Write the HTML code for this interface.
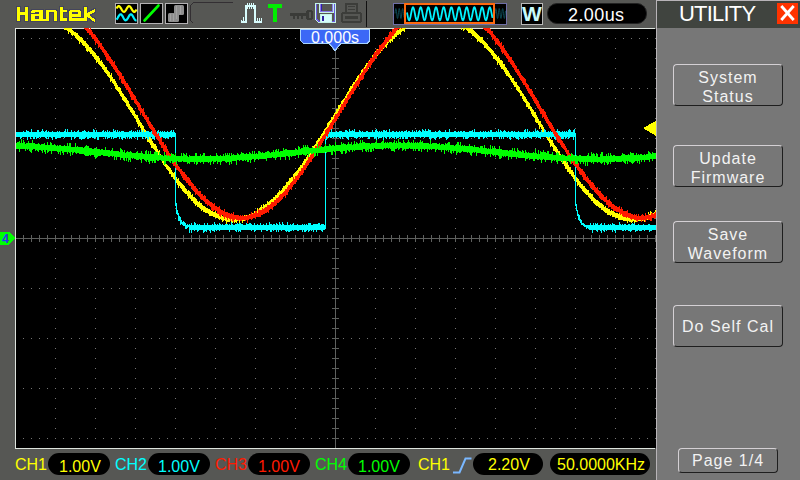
<!DOCTYPE html>
<html><head><meta charset="utf-8">
<style>
*{margin:0;padding:0;box-sizing:border-box}
html,body{width:800px;height:480px;overflow:hidden;background:#565754}
body{position:relative;font-family:"Liberation Sans",sans-serif}
.abs{position:absolute}
.t{position:absolute;font-size:16px;line-height:16px;top:457px;white-space:nowrap;transform-origin:0 0}
.pill{position:absolute;background:#000;border-radius:11px;height:22px;top:453px}

.btn{position:absolute;left:673px;width:110px;border-top:1px solid #d4d0d4;border-left:1px solid #d4d0d4;border-right:1px solid #1e1e1e;border-bottom:1px solid #1e1e1e;border-radius:4px;color:#f2f2f2;font-size:16px;text-align:center;letter-spacing:1px}
</style></head><body>
<svg class="abs" style="left:0;top:0" width="800" height="480" viewBox="0 0 800 480" shape-rendering="crispEdges">

<!-- header icons -->
<rect x="115" y="3" width="23" height="21" fill="#b4b2b4"/>
<rect x="116" y="4" width="21" height="19" fill="#000"/>
<path d="M116.5 8.47 L117.0 7.64 L117.5 6.93 L118.0 6.42 L118.5 6.14 L119.0 6.13 L119.5 6.38 L120.0 6.87 L120.5 7.56 L121.0 8.39 L121.5 9.26 L122.0 10.12 L122.5 10.87 L123.0 11.45 L123.5 11.80 L124.0 11.90 L124.5 11.72 L125.0 11.30 L125.5 10.66 L126.0 9.87 L126.5 9.00 L127.0 8.13 L127.5 7.34 L128.0 6.70 L128.5 6.28 L129.0 6.10 L129.5 6.20 L130.0 6.55 L130.5 7.13 L131.0 7.88 L131.5 8.74 L132.0 9.61 L132.5 10.44 L133.0 11.13 L133.5 11.62 L134.0 11.87 L134.5 11.86 L135.0 11.58 L135.5 11.07 L136.0 10.36 L136.5 9.53" stroke="#ffff00" stroke-width="2.2" fill="none" shape-rendering="auto"/>
<path d="M116.5 19.68 L117.0 19.02 L117.5 18.20 L118.0 17.30 L118.5 16.40 L119.0 15.58 L119.5 14.92 L120.0 14.48 L120.5 14.30 L121.0 14.40 L121.5 14.77 L122.0 15.36 L122.5 16.14 L123.0 17.03 L123.5 17.94 L124.0 18.79 L124.5 19.50 L125.0 20.01 L125.5 20.27 L126.0 20.26 L126.5 19.97 L127.0 19.44 L127.5 18.71 L128.0 17.85 L128.5 16.93 L129.0 16.06 L129.5 15.29 L130.0 14.72 L130.5 14.38 L131.0 14.31 L131.5 14.52 L132.0 14.98 L132.5 15.66 L133.0 16.49 L133.5 17.39 L134.0 18.29 L134.5 19.09 L135.0 19.73 L135.5 20.15 L136.0 20.30 L136.5 20.17" stroke="#00f0ff" stroke-width="2.2" fill="none" shape-rendering="auto"/>
<rect x="140" y="3" width="23" height="21" fill="#b4b2b4"/>
<rect x="141" y="4" width="21" height="19" fill="#000"/>
<line x1="144.5" y1="20.5" x2="158.5" y2="5.5" stroke="#00ff00" stroke-width="2.6" stroke-linecap="round" shape-rendering="auto"/>
<rect x="165" y="3" width="23" height="21" fill="#b4b2b4"/>
<rect x="166" y="4" width="21" height="19" fill="#000"/>
<defs><filter id="bl" x="-20%" y="-20%" width="140%" height="140%"><feGaussianBlur stdDeviation="0.7"/></filter></defs>
<g shape-rendering="auto" fill="#8e8e8e" filter="url(#bl)">
<rect x="168" y="13" width="11" height="9" rx="1.5"/>
<rect x="174" y="5" width="10" height="10" rx="1.5"/>
</g>
<g fill="#b0b0b0" opacity="0.6"><rect x="170" y="14" width="1" height="7"/><rect x="173" y="14" width="1" height="7"/><rect x="176" y="6" width="1" height="13"/><rect x="180" y="6" width="1" height="8"/></g>
<path d="M193 2h40v1h-40zM190 5h1v16h-1zM191 4h1v1h-1zM192 3h1v1h-1zM191 21h1v1h-1zM192 22h1v1h-1z" fill="#332f33"/>
<!-- pulse icon -->
<path d="M241 21.8H246V6.2H255V21.8H262" fill="none" stroke="#d8fcfc" stroke-width="2" shape-rendering="crispEdges"/>
<path d="M247 3h1v6h-1zM249 3h1v6h-1zM251 3h1v6h-1zM253 3h1v6h-1zM257 18h1v5h-1zM259 18h1v5h-1zM261 18h1v5h-1zM243 17h1v6h-1zM241 20h1v3h-1z" fill="#d8fcfc"/>
<!-- T -->
<rect x="268" y="4" width="14" height="4" fill="#00ee00"/>
<rect x="273" y="8" width="4" height="14" fill="#00ee00"/>
<!-- key -->
<g fill="#3a3b38">
<rect x="290" y="13" width="17" height="3"/>
<rect x="293" y="16" width="2" height="3"/><rect x="297" y="16" width="2" height="3"/><rect x="301" y="16" width="2" height="3"/>
<rect x="306" y="10" width="7" height="10" rx="3"/>
</g>
<rect x="309" y="12" width="2" height="6" fill="#565754"/>
<!-- floppy -->
<path d="M315 3h21v20h-18l-3-3z" fill="#c4f2e6"/>
<path d="M316 4h19v18h-16.5l-2.5-2.5z" fill="#6a58e0"/>
<path d="M317 4h17v17h-15l-2-2z" fill="#565754"/>
<path d="M319 3h15v10h-15z" fill="#c4f2e6"/>
<path d="M320 4h13v8h-13z" fill="#8a78e8"/>
<path d="M321 4h11v7h-11z" fill="#565754"/>
<rect x="321" y="4" width="1" height="7" fill="#3020b0"/>
<path d="M320 14h12v8h-12z" fill="#c4f2e6"/>
<rect x="321" y="15" width="10" height="7" fill="#d4fcfc"/>
<rect x="322" y="16" width="2" height="5" fill="#3020a0"/>
<!-- printer -->
<g fill="none" stroke="#3c3d3a" stroke-width="2">
<rect x="346" y="4" width="11" height="9"/>
<rect x="342" y="13" width="19" height="9" rx="2"/>
</g>
<rect x="348" y="6" width="7" height="1" fill="#3c3d3a"/><rect x="348" y="9" width="7" height="1" fill="#3c3d3a"/>
<rect x="345" y="16" width="13" height="3" fill="#3c3d3a"/>
<rect x="366" y="1" width="1" height="26" fill="#111"/>
<!-- overview -->
<rect x="393" y="3" width="114" height="22" fill="#6e6ea6"/>
<rect x="394" y="4" width="112" height="20" fill="#000"/>
<path d="M395.0 13.50 L395.2 11.27 L395.5 9.51 L395.8 8.59 L396.0 8.69 L396.2 9.80 L396.5 11.69 L396.8 13.96 L397.0 16.13 L397.2 17.75 L397.5 18.48 L397.8 18.16 L398.0 16.87 L398.2 14.87 L398.5 12.58 L398.8 10.49 L399.0 9.02 L399.2 8.50 L399.5 9.02 L399.8 10.49 L400.0 12.58 L400.2 14.87 L400.5 16.87 L400.8 18.16 L401.0 18.48 L401.2 17.75 L401.5 16.13 L401.8 13.96 L402.0 11.69 L402.2 9.80 L402.5 8.69 L402.8 8.59 L403.0 9.51 L403.2 11.27 L403.5 13.50 L403.8 15.73 L404.0 17.49M495.0 13.50 L495.2 11.27 L495.5 9.51 L495.8 8.59 L496.0 8.69 L496.2 9.80 L496.5 11.69 L496.8 13.96 L497.0 16.13 L497.2 17.75 L497.5 18.48 L497.8 18.16 L498.0 16.87 L498.2 14.87 L498.5 12.58 L498.8 10.49 L499.0 9.02 L499.2 8.50 L499.5 9.02 L499.8 10.49 L500.0 12.58 L500.2 14.87 L500.5 16.87 L500.8 18.16 L501.0 18.48 L501.2 17.75 L501.5 16.13 L501.8 13.96 L502.0 11.69 L502.2 9.80 L502.5 8.69 L502.8 8.59 L503.0 9.51 L503.2 11.27 L503.5 13.50 L503.8 15.73 L504.0 17.49 L504.2 18.41 L504.5 18.31 L504.8 17.20 L505.0 15.31 L505.2 13.04 L505.5 10.87" stroke="#0c4a55" stroke-width="1" fill="none" shape-rendering="auto"/>
<rect x="404" y="3" width="91" height="21" fill="#ff6a10"/>
<rect x="406" y="5" width="87" height="17" fill="#000"/>
<path d="M407.00 12.46 L407.25 13.78 L407.50 15.10 L407.75 16.37 L408.00 17.52 L408.25 18.52 L408.50 19.32 L408.75 19.88 L409.00 20.19 L409.25 20.23 L409.50 20.00 L409.75 19.51 L410.00 18.78 L410.25 17.84 L410.50 16.73 L410.75 15.49 L411.00 14.18 L411.25 12.85 L411.50 11.57 L411.75 10.37 L412.00 9.31 L412.25 8.44 L412.50 7.79 L412.75 7.39 L413.00 7.25 L413.25 7.39 L413.50 7.79 L413.75 8.44 L414.00 9.31 L414.25 10.37 L414.50 11.57 L414.75 12.85 L415.00 14.18 L415.25 15.49 L415.50 16.73 L415.75 17.84 L416.00 18.78 L416.25 19.51 L416.50 20.00 L416.75 20.23 L417.00 20.19 L417.25 19.88 L417.50 19.32 L417.75 18.52 L418.00 17.52 L418.25 16.37 L418.50 15.10 L418.75 13.78 L419.00 12.46 L419.25 11.19 L419.50 10.03 L419.75 9.03 L420.00 8.22 L420.25 7.64 L420.50 7.32 L420.75 7.26 L421.00 7.48 L421.25 7.96 L421.50 8.68 L421.75 9.61 L422.00 10.71 L422.25 11.94 L422.50 13.25 L422.75 14.58 L423.00 15.87 L423.25 17.08 L423.50 18.14 L423.75 19.02 L424.00 19.69 L424.25 20.10 L424.50 20.25 L424.75 20.13 L425.00 19.74 L425.25 19.10 L425.50 18.24 L425.75 17.19 L426.00 16.00 L426.25 14.71 L426.50 13.38 L426.75 12.07 L427.00 10.83 L427.25 9.71 L427.50 8.76 L427.75 8.02 L428.00 7.52 L428.25 7.27 L428.50 7.30 L428.75 7.60 L429.00 8.15 L429.25 8.94 L429.50 9.92 L429.75 11.07 L430.00 12.33 L430.25 13.65 L430.50 14.97 L430.75 16.25 L431.00 17.41 L431.25 18.43 L431.50 19.25 L431.75 19.84 L432.00 20.17 L432.25 20.24 L432.50 20.04 L432.75 19.57 L433.00 18.86 L433.25 17.94 L433.50 16.85 L433.75 15.62 L434.00 14.31 L434.25 12.99 L434.50 11.69 L434.75 10.48 L435.00 9.41 L435.25 8.51 L435.50 7.84 L435.75 7.41 L436.00 7.25 L436.25 7.36 L436.50 7.74 L436.75 8.36 L437.00 9.21 L437.25 10.25 L437.50 11.44 L437.75 12.72 L438.00 14.05 L438.25 15.36 L438.50 16.61 L438.75 17.74 L439.00 18.70 L439.25 19.45 L439.50 19.97 L439.75 20.22 L440.00 20.21 L440.25 19.93 L440.50 19.38 L440.75 18.61 L441.00 17.63 L441.25 16.49 L441.50 15.23 L441.75 13.92 L442.00 12.59 L442.25 11.32 L442.50 10.14 L442.75 9.12 L443.00 8.29 L443.25 7.69 L443.50 7.34 L443.75 7.26 L444.00 7.45 L444.25 7.90 L444.50 8.59 L444.75 9.51 L445.00 10.60 L445.25 11.82 L445.50 13.12 L445.75 14.45 L446.00 15.75 L446.25 16.96 L446.50 18.04 L446.75 18.95 L447.00 19.63 L447.25 20.07 L447.50 20.25 L447.75 20.15 L448.00 19.79 L448.25 19.18 L448.50 18.33 L448.75 17.30 L449.00 16.12 L449.25 14.84 L449.50 13.52 L449.75 12.20 L450.00 10.95 L450.25 9.82 L450.50 8.85 L450.75 8.08 L451.00 7.55 L451.25 7.28 L451.50 7.28 L451.75 7.55 L452.00 8.08 L452.25 8.85 L452.50 9.82 L452.75 10.95 L453.00 12.20 L453.25 13.52 L453.50 14.84 L453.75 16.12 L454.00 17.30 L454.25 18.33 L454.50 19.18 L454.75 19.79 L455.00 20.15 L455.25 20.25 L455.50 20.07 L455.75 19.63 L456.00 18.95 L456.25 18.04 L456.50 16.96 L456.75 15.75 L457.00 14.45 L457.25 13.12 L457.50 11.82 L457.75 10.60 L458.00 9.51 L458.25 8.59 L458.50 7.90 L458.75 7.45 L459.00 7.26 L459.25 7.34 L459.50 7.69 L459.75 8.29 L460.00 9.12 L460.25 10.14 L460.50 11.32 L460.75 12.59 L461.00 13.92 L461.25 15.23 L461.50 16.49 L461.75 17.63 L462.00 18.61 L462.25 19.38 L462.50 19.93 L462.75 20.21 L463.00 20.22 L463.25 19.97 L463.50 19.45 L463.75 18.70 L464.00 17.74 L464.25 16.61 L464.50 15.36 L464.75 14.05 L465.00 12.72 L465.25 11.44 L465.50 10.25 L465.75 9.21 L466.00 8.36 L466.25 7.74 L466.50 7.36 L466.75 7.25 L467.00 7.41 L467.25 7.84 L467.50 8.51 L467.75 9.41 L468.00 10.48 L468.25 11.69 L468.50 12.99 L468.75 14.31 L469.00 15.62 L469.25 16.85 L469.50 17.94 L469.75 18.86 L470.00 19.57 L470.25 20.04 L470.50 20.24 L470.75 20.17 L471.00 19.84 L471.25 19.25 L471.50 18.43 L471.75 17.41 L472.00 16.25 L472.25 14.97 L472.50 13.65 L472.75 12.33 L473.00 11.07 L473.25 9.92 L473.50 8.94 L473.75 8.15 L474.00 7.60 L474.25 7.30 L474.50 7.27 L474.75 7.52 L475.00 8.02 L475.25 8.76 L475.50 9.71 L475.75 10.83 L476.00 12.07 L476.25 13.38 L476.50 14.71 L476.75 16.00 L477.00 17.19 L477.25 18.24 L477.50 19.10 L477.75 19.74 L478.00 20.13 L478.25 20.25 L478.50 20.10 L478.75 19.69 L479.00 19.02 L479.25 18.14 L479.50 17.08 L479.75 15.87 L480.00 14.58 L480.25 13.25 L480.50 11.94 L480.75 10.71 L481.00 9.61 L481.25 8.68 L481.50 7.96 L481.75 7.48 L482.00 7.26 L482.25 7.32 L482.50 7.64 L482.75 8.22 L483.00 9.03 L483.25 10.03 L483.50 11.19 L483.75 12.46 L484.00 13.78 L484.25 15.10 L484.50 16.37 L484.75 17.52 L485.00 18.52 L485.25 19.32 L485.50 19.88 L485.75 20.19 L486.00 20.23 L486.25 20.00 L486.50 19.51 L486.75 18.78 L487.00 17.84 L487.25 16.73 L487.50 15.49 L487.75 14.18 L488.00 12.85 L488.25 11.57 L488.50 10.37 L488.75 9.31 L489.00 8.44 L489.25 7.79 L489.50 7.39 L489.75 7.25 L490.00 7.39 L490.25 7.79 L490.50 8.44 L490.75 9.31 L491.00 10.37 L491.25 11.57 L491.50 12.85 L491.75 14.18 L492.00 15.49 L492.25 16.73 L492.50 17.84" stroke="#00f4ff" stroke-width="1.8" fill="none" shape-rendering="auto"/>
<!-- W box -->
<rect x="521" y="3" width="22" height="22" fill="#b8b8b8"/>
<rect x="522" y="4" width="20" height="20" fill="#000"/>

<!-- logo -->
<path d="M16 21h5v1h-5zM24 21h5v1h-5zM30 21h20v1h-20zM53 21h5v1h-5zM59 21h29v1h-29zM91 21h3v1h-3zM95 21h1v1h-1zM16 6h5v1h-5zM24 6h5v1h-5zM59 6h5v1h-5zM83 6h5v1h-5zM16 16h1v1h-1zM20 16h1v1h-1zM24 16h1v1h-1zM28 16h1v1h-1zM30 16h1v1h-1zM35 16h4v1h-4zM43 16h1v1h-1zM45 16h1v1h-1zM49 16h1v1h-1zM53 16h1v1h-1zM57 16h1v1h-1zM59 16h1v1h-1zM63 16h1v1h-1zM68 16h1v1h-1zM81 16h1v1h-1zM83 16h1v1h-1zM91 16h2v1h-2zM16 12h1v1h-1zM28 12h1v1h-1zM30 12h1v1h-1zM35 12h4v1h-4zM43 12h1v1h-1zM45 12h1v1h-1zM49 12h5v1h-5zM57 12h1v1h-1zM59 12h1v1h-1zM63 12h6v1h-6zM72 12h6v1h-6zM81 12h1v1h-1zM83 12h1v1h-1zM87 12h1v1h-1zM94 12h2v1h-2zM16 18h1v1h-1zM20 18h1v1h-1zM24 18h1v1h-1zM28 18h1v1h-1zM30 18h1v1h-1zM35 18h4v1h-4zM43 18h3v1h-3zM49 18h1v1h-1zM53 18h1v1h-1zM57 18h1v1h-1zM59 18h1v1h-1zM67 18h2v1h-2zM87 18h3v1h-3zM94 18h2v1h-2zM16 17h1v1h-1zM20 17h1v1h-1zM24 17h1v1h-1zM28 17h1v1h-1zM30 17h1v1h-1zM35 17h1v1h-1zM38 17h1v1h-1zM43 17h1v1h-1zM45 17h1v1h-1zM49 17h1v1h-1zM53 17h1v1h-1zM57 17h1v1h-1zM59 17h1v1h-1zM63 17h6v1h-6zM72 17h12v1h-12zM87 17h1v1h-1zM92 17h3v1h-3zM16 9h1v1h-1zM20 9h1v1h-1zM24 9h1v1h-1zM28 9h1v1h-1zM31 9h13v1h-13zM45 9h12v1h-12zM59 9h1v1h-1zM63 9h5v1h-5zM69 9h12v1h-12zM83 9h1v1h-1zM87 9h1v1h-1zM91 9h3v1h-3zM95 9h1v1h-1zM93 22h3v1h-3zM16 13h1v1h-1zM28 13h1v1h-1zM30 13h9v1h-9zM43 13h1v1h-1zM45 13h1v1h-1zM49 13h1v1h-1zM53 13h1v1h-1zM57 13h1v1h-1zM59 13h1v1h-1zM63 13h1v1h-1zM68 13h1v1h-1zM72 13h6v1h-6zM81 13h1v1h-1zM83 13h1v1h-1zM92 13h3v1h-3zM16 10h1v1h-1zM20 10h1v1h-1zM24 10h1v1h-1zM28 10h1v1h-1zM30 10h2v1h-2zM43 10h1v1h-1zM45 10h1v1h-1zM56 10h2v1h-2zM59 10h1v1h-1zM67 10h3v1h-3zM80 10h2v1h-2zM83 10h1v1h-1zM87 10h1v1h-1zM89 10h3v1h-3zM95 10h1v1h-1zM16 19h1v1h-1zM20 19h1v1h-1zM24 19h1v1h-1zM28 19h1v1h-1zM30 19h1v1h-1zM49 19h1v1h-1zM53 19h1v1h-1zM57 19h1v1h-1zM59 19h1v1h-1zM67 19h2v1h-2zM87 19h1v1h-1zM89 19h2v1h-2zM95 19h1v1h-1zM16 7h1v1h-1zM20 7h1v1h-1zM24 7h1v1h-1zM28 7h1v1h-1zM59 7h1v1h-1zM63 7h1v1h-1zM83 7h1v1h-1zM87 7h1v1h-1zM16 20h1v1h-1zM20 20h1v1h-1zM24 20h1v1h-1zM28 20h1v1h-1zM30 20h1v1h-1zM49 20h1v1h-1zM53 20h1v1h-1zM57 20h1v1h-1zM59 20h1v1h-1zM67 20h2v1h-2zM87 20h1v1h-1zM90 20h2v1h-2zM95 20h1v1h-1zM16 8h1v1h-1zM20 8h1v1h-1zM24 8h1v1h-1zM28 8h1v1h-1zM59 8h1v1h-1zM63 8h1v1h-1zM83 8h1v1h-1zM87 8h1v1h-1zM93 8h3v1h-3zM16 14h1v1h-1zM28 14h1v1h-1zM30 14h1v1h-1zM43 14h1v1h-1zM45 14h1v1h-1zM49 14h1v1h-1zM53 14h1v1h-1zM57 14h1v1h-1zM59 14h1v1h-1zM63 14h1v1h-1zM68 14h1v1h-1zM81 14h1v1h-1zM83 14h1v1h-1zM90 14h3v1h-3zM16 15h1v1h-1zM20 15h5v1h-5zM28 15h1v1h-1zM30 15h1v1h-1zM43 15h1v1h-1zM45 15h1v1h-1zM49 15h1v1h-1zM53 15h1v1h-1zM57 15h1v1h-1zM59 15h1v1h-1zM63 15h1v1h-1zM68 15h1v1h-1zM81 15h1v1h-1zM83 15h1v1h-1zM90 15h2v1h-2zM16 11h1v1h-1zM20 11h5v1h-5zM28 11h1v1h-1zM30 11h1v1h-1zM43 11h1v1h-1zM45 11h1v1h-1zM57 11h1v1h-1zM59 11h1v1h-1zM67 11h2v1h-2zM81 11h1v1h-1zM83 11h1v1h-1zM87 11h3v1h-3zM95 11h1v1h-1z" fill="#44455c"/>
<path d="M17 17h3v1h-3zM25 17h3v1h-3zM31 17h4v1h-4zM39 17h4v1h-4zM46 17h3v1h-3zM54 17h3v1h-3zM60 17h3v1h-3zM69 17h3v1h-3zM84 17h3v1h-3zM88 17h4v1h-4zM17 20h3v1h-3zM25 20h3v1h-3zM31 20h18v1h-18zM54 20h3v1h-3zM60 20h7v1h-7zM69 20h18v1h-18zM92 20h3v1h-3zM17 13h11v1h-11zM39 13h4v1h-4zM46 13h3v1h-3zM54 13h3v1h-3zM60 13h3v1h-3zM69 13h3v1h-3zM78 13h3v1h-3zM84 13h8v1h-8zM17 9h3v1h-3zM25 9h3v1h-3zM60 9h3v1h-3zM84 9h3v1h-3zM94 9h1v1h-1zM17 11h3v1h-3zM25 11h3v1h-3zM31 11h12v1h-12zM46 11h11v1h-11zM60 11h7v1h-7zM69 11h12v1h-12zM84 11h3v1h-3zM90 11h5v1h-5zM17 10h3v1h-3zM25 10h3v1h-3zM32 10h11v1h-11zM46 10h10v1h-10zM60 10h7v1h-7zM70 10h10v1h-10zM84 10h3v1h-3zM92 10h3v1h-3zM17 18h3v1h-3zM25 18h3v1h-3zM31 18h4v1h-4zM39 18h4v1h-4zM46 18h3v1h-3zM54 18h3v1h-3zM60 18h7v1h-7zM69 18h18v1h-18zM90 18h4v1h-4zM17 19h3v1h-3zM25 19h3v1h-3zM31 19h18v1h-18zM54 19h3v1h-3zM60 19h7v1h-7zM69 19h18v1h-18zM91 19h4v1h-4zM94 21h1v1h-1zM17 15h3v1h-3zM25 15h3v1h-3zM31 15h12v1h-12zM46 15h3v1h-3zM54 15h3v1h-3zM60 15h3v1h-3zM69 15h12v1h-12zM84 15h6v1h-6zM17 12h11v1h-11zM31 12h4v1h-4zM39 12h4v1h-4zM46 12h3v1h-3zM54 12h3v1h-3zM60 12h3v1h-3zM69 12h3v1h-3zM78 12h3v1h-3zM84 12h3v1h-3zM88 12h6v1h-6zM17 7h3v1h-3zM25 7h3v1h-3zM60 7h3v1h-3zM84 7h3v1h-3zM17 16h3v1h-3zM25 16h3v1h-3zM31 16h4v1h-4zM39 16h4v1h-4zM46 16h3v1h-3zM54 16h3v1h-3zM60 16h3v1h-3zM69 16h12v1h-12zM84 16h7v1h-7zM17 8h3v1h-3zM25 8h3v1h-3zM60 8h3v1h-3zM84 8h3v1h-3zM17 14h11v1h-11zM31 14h12v1h-12zM46 14h3v1h-3zM54 14h3v1h-3zM60 14h3v1h-3zM69 14h12v1h-12zM84 14h6v1h-6z" fill="#ffff00"/>
<!-- screen -->
<rect x="15" y="28" width="640" height="421" fill="#dde3dd"/>
<rect x="16" y="29" width="640" height="419" fill="#000"/>
<path d="M23 38h1v1h-1zM31 38h1v1h-1zM39 38h1v1h-1zM47 38h1v1h-1zM55 38h1v1h-1zM63 38h1v1h-1zM71 38h1v1h-1zM79 38h1v1h-1zM87 38h1v1h-1zM95 38h1v1h-1zM103 38h1v1h-1zM111 38h1v1h-1zM119 38h1v1h-1zM127 38h1v1h-1zM135 38h1v1h-1zM143 38h1v1h-1zM151 38h1v1h-1zM159 38h1v1h-1zM167 38h1v1h-1zM175 38h1v1h-1zM183 38h1v1h-1zM191 38h1v1h-1zM199 38h1v1h-1zM207 38h1v1h-1zM215 38h1v1h-1zM223 38h1v1h-1zM231 38h1v1h-1zM239 38h1v1h-1zM247 38h1v1h-1zM255 38h1v1h-1zM263 38h1v1h-1zM271 38h1v1h-1zM279 38h1v1h-1zM287 38h1v1h-1zM295 38h1v1h-1zM303 38h1v1h-1zM311 38h1v1h-1zM319 38h1v1h-1zM327 38h1v1h-1zM335 38h1v1h-1zM343 38h1v1h-1zM351 38h1v1h-1zM359 38h1v1h-1zM367 38h1v1h-1zM375 38h1v1h-1zM383 38h1v1h-1zM391 38h1v1h-1zM399 38h1v1h-1zM407 38h1v1h-1zM415 38h1v1h-1zM423 38h1v1h-1zM431 38h1v1h-1zM439 38h1v1h-1zM447 38h1v1h-1zM455 38h1v1h-1zM463 38h1v1h-1zM471 38h1v1h-1zM479 38h1v1h-1zM487 38h1v1h-1zM495 38h1v1h-1zM503 38h1v1h-1zM511 38h1v1h-1zM519 38h1v1h-1zM527 38h1v1h-1zM535 38h1v1h-1zM543 38h1v1h-1zM551 38h1v1h-1zM559 38h1v1h-1zM567 38h1v1h-1zM575 38h1v1h-1zM583 38h1v1h-1zM591 38h1v1h-1zM599 38h1v1h-1zM607 38h1v1h-1zM615 38h1v1h-1zM623 38h1v1h-1zM631 38h1v1h-1zM639 38h1v1h-1zM647 38h1v1h-1zM655 38h1v1h-1zM23 88h1v1h-1zM31 88h1v1h-1zM39 88h1v1h-1zM47 88h1v1h-1zM55 88h1v1h-1zM63 88h1v1h-1zM71 88h1v1h-1zM79 88h1v1h-1zM87 88h1v1h-1zM95 88h1v1h-1zM103 88h1v1h-1zM111 88h1v1h-1zM119 88h1v1h-1zM127 88h1v1h-1zM135 88h1v1h-1zM143 88h1v1h-1zM151 88h1v1h-1zM159 88h1v1h-1zM167 88h1v1h-1zM175 88h1v1h-1zM183 88h1v1h-1zM191 88h1v1h-1zM199 88h1v1h-1zM207 88h1v1h-1zM215 88h1v1h-1zM223 88h1v1h-1zM231 88h1v1h-1zM239 88h1v1h-1zM247 88h1v1h-1zM255 88h1v1h-1zM263 88h1v1h-1zM271 88h1v1h-1zM279 88h1v1h-1zM287 88h1v1h-1zM295 88h1v1h-1zM303 88h1v1h-1zM311 88h1v1h-1zM319 88h1v1h-1zM327 88h1v1h-1zM335 88h1v1h-1zM343 88h1v1h-1zM351 88h1v1h-1zM359 88h1v1h-1zM367 88h1v1h-1zM375 88h1v1h-1zM383 88h1v1h-1zM391 88h1v1h-1zM399 88h1v1h-1zM407 88h1v1h-1zM415 88h1v1h-1zM423 88h1v1h-1zM431 88h1v1h-1zM439 88h1v1h-1zM447 88h1v1h-1zM455 88h1v1h-1zM463 88h1v1h-1zM471 88h1v1h-1zM479 88h1v1h-1zM487 88h1v1h-1zM495 88h1v1h-1zM503 88h1v1h-1zM511 88h1v1h-1zM519 88h1v1h-1zM527 88h1v1h-1zM535 88h1v1h-1zM543 88h1v1h-1zM551 88h1v1h-1zM559 88h1v1h-1zM567 88h1v1h-1zM575 88h1v1h-1zM583 88h1v1h-1zM591 88h1v1h-1zM599 88h1v1h-1zM607 88h1v1h-1zM615 88h1v1h-1zM623 88h1v1h-1zM631 88h1v1h-1zM639 88h1v1h-1zM647 88h1v1h-1zM655 88h1v1h-1zM23 138h1v1h-1zM31 138h1v1h-1zM39 138h1v1h-1zM47 138h1v1h-1zM55 138h1v1h-1zM63 138h1v1h-1zM71 138h1v1h-1zM79 138h1v1h-1zM87 138h1v1h-1zM95 138h1v1h-1zM103 138h1v1h-1zM111 138h1v1h-1zM119 138h1v1h-1zM127 138h1v1h-1zM135 138h1v1h-1zM143 138h1v1h-1zM151 138h1v1h-1zM159 138h1v1h-1zM167 138h1v1h-1zM175 138h1v1h-1zM183 138h1v1h-1zM191 138h1v1h-1zM199 138h1v1h-1zM207 138h1v1h-1zM215 138h1v1h-1zM223 138h1v1h-1zM231 138h1v1h-1zM239 138h1v1h-1zM247 138h1v1h-1zM255 138h1v1h-1zM263 138h1v1h-1zM271 138h1v1h-1zM279 138h1v1h-1zM287 138h1v1h-1zM295 138h1v1h-1zM303 138h1v1h-1zM311 138h1v1h-1zM319 138h1v1h-1zM327 138h1v1h-1zM335 138h1v1h-1zM343 138h1v1h-1zM351 138h1v1h-1zM359 138h1v1h-1zM367 138h1v1h-1zM375 138h1v1h-1zM383 138h1v1h-1zM391 138h1v1h-1zM399 138h1v1h-1zM407 138h1v1h-1zM415 138h1v1h-1zM423 138h1v1h-1zM431 138h1v1h-1zM439 138h1v1h-1zM447 138h1v1h-1zM455 138h1v1h-1zM463 138h1v1h-1zM471 138h1v1h-1zM479 138h1v1h-1zM487 138h1v1h-1zM495 138h1v1h-1zM503 138h1v1h-1zM511 138h1v1h-1zM519 138h1v1h-1zM527 138h1v1h-1zM535 138h1v1h-1zM543 138h1v1h-1zM551 138h1v1h-1zM559 138h1v1h-1zM567 138h1v1h-1zM575 138h1v1h-1zM583 138h1v1h-1zM591 138h1v1h-1zM599 138h1v1h-1zM607 138h1v1h-1zM615 138h1v1h-1zM623 138h1v1h-1zM631 138h1v1h-1zM639 138h1v1h-1zM647 138h1v1h-1zM655 138h1v1h-1zM23 188h1v1h-1zM31 188h1v1h-1zM39 188h1v1h-1zM47 188h1v1h-1zM55 188h1v1h-1zM63 188h1v1h-1zM71 188h1v1h-1zM79 188h1v1h-1zM87 188h1v1h-1zM95 188h1v1h-1zM103 188h1v1h-1zM111 188h1v1h-1zM119 188h1v1h-1zM127 188h1v1h-1zM135 188h1v1h-1zM143 188h1v1h-1zM151 188h1v1h-1zM159 188h1v1h-1zM167 188h1v1h-1zM175 188h1v1h-1zM183 188h1v1h-1zM191 188h1v1h-1zM199 188h1v1h-1zM207 188h1v1h-1zM215 188h1v1h-1zM223 188h1v1h-1zM231 188h1v1h-1zM239 188h1v1h-1zM247 188h1v1h-1zM255 188h1v1h-1zM263 188h1v1h-1zM271 188h1v1h-1zM279 188h1v1h-1zM287 188h1v1h-1zM295 188h1v1h-1zM303 188h1v1h-1zM311 188h1v1h-1zM319 188h1v1h-1zM327 188h1v1h-1zM335 188h1v1h-1zM343 188h1v1h-1zM351 188h1v1h-1zM359 188h1v1h-1zM367 188h1v1h-1zM375 188h1v1h-1zM383 188h1v1h-1zM391 188h1v1h-1zM399 188h1v1h-1zM407 188h1v1h-1zM415 188h1v1h-1zM423 188h1v1h-1zM431 188h1v1h-1zM439 188h1v1h-1zM447 188h1v1h-1zM455 188h1v1h-1zM463 188h1v1h-1zM471 188h1v1h-1zM479 188h1v1h-1zM487 188h1v1h-1zM495 188h1v1h-1zM503 188h1v1h-1zM511 188h1v1h-1zM519 188h1v1h-1zM527 188h1v1h-1zM535 188h1v1h-1zM543 188h1v1h-1zM551 188h1v1h-1zM559 188h1v1h-1zM567 188h1v1h-1zM575 188h1v1h-1zM583 188h1v1h-1zM591 188h1v1h-1zM599 188h1v1h-1zM607 188h1v1h-1zM615 188h1v1h-1zM623 188h1v1h-1zM631 188h1v1h-1zM639 188h1v1h-1zM647 188h1v1h-1zM655 188h1v1h-1zM23 288h1v1h-1zM31 288h1v1h-1zM39 288h1v1h-1zM47 288h1v1h-1zM55 288h1v1h-1zM63 288h1v1h-1zM71 288h1v1h-1zM79 288h1v1h-1zM87 288h1v1h-1zM95 288h1v1h-1zM103 288h1v1h-1zM111 288h1v1h-1zM119 288h1v1h-1zM127 288h1v1h-1zM135 288h1v1h-1zM143 288h1v1h-1zM151 288h1v1h-1zM159 288h1v1h-1zM167 288h1v1h-1zM175 288h1v1h-1zM183 288h1v1h-1zM191 288h1v1h-1zM199 288h1v1h-1zM207 288h1v1h-1zM215 288h1v1h-1zM223 288h1v1h-1zM231 288h1v1h-1zM239 288h1v1h-1zM247 288h1v1h-1zM255 288h1v1h-1zM263 288h1v1h-1zM271 288h1v1h-1zM279 288h1v1h-1zM287 288h1v1h-1zM295 288h1v1h-1zM303 288h1v1h-1zM311 288h1v1h-1zM319 288h1v1h-1zM327 288h1v1h-1zM335 288h1v1h-1zM343 288h1v1h-1zM351 288h1v1h-1zM359 288h1v1h-1zM367 288h1v1h-1zM375 288h1v1h-1zM383 288h1v1h-1zM391 288h1v1h-1zM399 288h1v1h-1zM407 288h1v1h-1zM415 288h1v1h-1zM423 288h1v1h-1zM431 288h1v1h-1zM439 288h1v1h-1zM447 288h1v1h-1zM455 288h1v1h-1zM463 288h1v1h-1zM471 288h1v1h-1zM479 288h1v1h-1zM487 288h1v1h-1zM495 288h1v1h-1zM503 288h1v1h-1zM511 288h1v1h-1zM519 288h1v1h-1zM527 288h1v1h-1zM535 288h1v1h-1zM543 288h1v1h-1zM551 288h1v1h-1zM559 288h1v1h-1zM567 288h1v1h-1zM575 288h1v1h-1zM583 288h1v1h-1zM591 288h1v1h-1zM599 288h1v1h-1zM607 288h1v1h-1zM615 288h1v1h-1zM623 288h1v1h-1zM631 288h1v1h-1zM639 288h1v1h-1zM647 288h1v1h-1zM655 288h1v1h-1zM23 338h1v1h-1zM31 338h1v1h-1zM39 338h1v1h-1zM47 338h1v1h-1zM55 338h1v1h-1zM63 338h1v1h-1zM71 338h1v1h-1zM79 338h1v1h-1zM87 338h1v1h-1zM95 338h1v1h-1zM103 338h1v1h-1zM111 338h1v1h-1zM119 338h1v1h-1zM127 338h1v1h-1zM135 338h1v1h-1zM143 338h1v1h-1zM151 338h1v1h-1zM159 338h1v1h-1zM167 338h1v1h-1zM175 338h1v1h-1zM183 338h1v1h-1zM191 338h1v1h-1zM199 338h1v1h-1zM207 338h1v1h-1zM215 338h1v1h-1zM223 338h1v1h-1zM231 338h1v1h-1zM239 338h1v1h-1zM247 338h1v1h-1zM255 338h1v1h-1zM263 338h1v1h-1zM271 338h1v1h-1zM279 338h1v1h-1zM287 338h1v1h-1zM295 338h1v1h-1zM303 338h1v1h-1zM311 338h1v1h-1zM319 338h1v1h-1zM327 338h1v1h-1zM335 338h1v1h-1zM343 338h1v1h-1zM351 338h1v1h-1zM359 338h1v1h-1zM367 338h1v1h-1zM375 338h1v1h-1zM383 338h1v1h-1zM391 338h1v1h-1zM399 338h1v1h-1zM407 338h1v1h-1zM415 338h1v1h-1zM423 338h1v1h-1zM431 338h1v1h-1zM439 338h1v1h-1zM447 338h1v1h-1zM455 338h1v1h-1zM463 338h1v1h-1zM471 338h1v1h-1zM479 338h1v1h-1zM487 338h1v1h-1zM495 338h1v1h-1zM503 338h1v1h-1zM511 338h1v1h-1zM519 338h1v1h-1zM527 338h1v1h-1zM535 338h1v1h-1zM543 338h1v1h-1zM551 338h1v1h-1zM559 338h1v1h-1zM567 338h1v1h-1zM575 338h1v1h-1zM583 338h1v1h-1zM591 338h1v1h-1zM599 338h1v1h-1zM607 338h1v1h-1zM615 338h1v1h-1zM623 338h1v1h-1zM631 338h1v1h-1zM639 338h1v1h-1zM647 338h1v1h-1zM655 338h1v1h-1zM23 388h1v1h-1zM31 388h1v1h-1zM39 388h1v1h-1zM47 388h1v1h-1zM55 388h1v1h-1zM63 388h1v1h-1zM71 388h1v1h-1zM79 388h1v1h-1zM87 388h1v1h-1zM95 388h1v1h-1zM103 388h1v1h-1zM111 388h1v1h-1zM119 388h1v1h-1zM127 388h1v1h-1zM135 388h1v1h-1zM143 388h1v1h-1zM151 388h1v1h-1zM159 388h1v1h-1zM167 388h1v1h-1zM175 388h1v1h-1zM183 388h1v1h-1zM191 388h1v1h-1zM199 388h1v1h-1zM207 388h1v1h-1zM215 388h1v1h-1zM223 388h1v1h-1zM231 388h1v1h-1zM239 388h1v1h-1zM247 388h1v1h-1zM255 388h1v1h-1zM263 388h1v1h-1zM271 388h1v1h-1zM279 388h1v1h-1zM287 388h1v1h-1zM295 388h1v1h-1zM303 388h1v1h-1zM311 388h1v1h-1zM319 388h1v1h-1zM327 388h1v1h-1zM335 388h1v1h-1zM343 388h1v1h-1zM351 388h1v1h-1zM359 388h1v1h-1zM367 388h1v1h-1zM375 388h1v1h-1zM383 388h1v1h-1zM391 388h1v1h-1zM399 388h1v1h-1zM407 388h1v1h-1zM415 388h1v1h-1zM423 388h1v1h-1zM431 388h1v1h-1zM439 388h1v1h-1zM447 388h1v1h-1zM455 388h1v1h-1zM463 388h1v1h-1zM471 388h1v1h-1zM479 388h1v1h-1zM487 388h1v1h-1zM495 388h1v1h-1zM503 388h1v1h-1zM511 388h1v1h-1zM519 388h1v1h-1zM527 388h1v1h-1zM535 388h1v1h-1zM543 388h1v1h-1zM551 388h1v1h-1zM559 388h1v1h-1zM567 388h1v1h-1zM575 388h1v1h-1zM583 388h1v1h-1zM591 388h1v1h-1zM599 388h1v1h-1zM607 388h1v1h-1zM615 388h1v1h-1zM623 388h1v1h-1zM631 388h1v1h-1zM639 388h1v1h-1zM647 388h1v1h-1zM655 388h1v1h-1zM23 438h1v1h-1zM31 438h1v1h-1zM39 438h1v1h-1zM47 438h1v1h-1zM55 438h1v1h-1zM63 438h1v1h-1zM71 438h1v1h-1zM79 438h1v1h-1zM87 438h1v1h-1zM95 438h1v1h-1zM103 438h1v1h-1zM111 438h1v1h-1zM119 438h1v1h-1zM127 438h1v1h-1zM135 438h1v1h-1zM143 438h1v1h-1zM151 438h1v1h-1zM159 438h1v1h-1zM167 438h1v1h-1zM175 438h1v1h-1zM183 438h1v1h-1zM191 438h1v1h-1zM199 438h1v1h-1zM207 438h1v1h-1zM215 438h1v1h-1zM223 438h1v1h-1zM231 438h1v1h-1zM239 438h1v1h-1zM247 438h1v1h-1zM255 438h1v1h-1zM263 438h1v1h-1zM271 438h1v1h-1zM279 438h1v1h-1zM287 438h1v1h-1zM295 438h1v1h-1zM303 438h1v1h-1zM311 438h1v1h-1zM319 438h1v1h-1zM327 438h1v1h-1zM335 438h1v1h-1zM343 438h1v1h-1zM351 438h1v1h-1zM359 438h1v1h-1zM367 438h1v1h-1zM375 438h1v1h-1zM383 438h1v1h-1zM391 438h1v1h-1zM399 438h1v1h-1zM407 438h1v1h-1zM415 438h1v1h-1zM423 438h1v1h-1zM431 438h1v1h-1zM439 438h1v1h-1zM447 438h1v1h-1zM455 438h1v1h-1zM463 438h1v1h-1zM471 438h1v1h-1zM479 438h1v1h-1zM487 438h1v1h-1zM495 438h1v1h-1zM503 438h1v1h-1zM511 438h1v1h-1zM519 438h1v1h-1zM527 438h1v1h-1zM535 438h1v1h-1zM543 438h1v1h-1zM551 438h1v1h-1zM559 438h1v1h-1zM567 438h1v1h-1zM575 438h1v1h-1zM583 438h1v1h-1zM591 438h1v1h-1zM599 438h1v1h-1zM607 438h1v1h-1zM615 438h1v1h-1zM623 438h1v1h-1zM631 438h1v1h-1zM639 438h1v1h-1zM647 438h1v1h-1zM655 438h1v1h-1zM55 48h1v1h-1zM55 58h1v1h-1zM55 68h1v1h-1zM55 78h1v1h-1zM55 98h1v1h-1zM55 108h1v1h-1zM55 118h1v1h-1zM55 128h1v1h-1zM55 148h1v1h-1zM55 158h1v1h-1zM55 168h1v1h-1zM55 178h1v1h-1zM55 198h1v1h-1zM55 208h1v1h-1zM55 218h1v1h-1zM55 228h1v1h-1zM55 248h1v1h-1zM55 258h1v1h-1zM55 268h1v1h-1zM55 278h1v1h-1zM55 298h1v1h-1zM55 308h1v1h-1zM55 318h1v1h-1zM55 328h1v1h-1zM55 348h1v1h-1zM55 358h1v1h-1zM55 368h1v1h-1zM55 378h1v1h-1zM55 398h1v1h-1zM55 408h1v1h-1zM55 418h1v1h-1zM55 428h1v1h-1zM95 48h1v1h-1zM95 58h1v1h-1zM95 68h1v1h-1zM95 78h1v1h-1zM95 98h1v1h-1zM95 108h1v1h-1zM95 118h1v1h-1zM95 128h1v1h-1zM95 148h1v1h-1zM95 158h1v1h-1zM95 168h1v1h-1zM95 178h1v1h-1zM95 198h1v1h-1zM95 208h1v1h-1zM95 218h1v1h-1zM95 228h1v1h-1zM95 248h1v1h-1zM95 258h1v1h-1zM95 268h1v1h-1zM95 278h1v1h-1zM95 298h1v1h-1zM95 308h1v1h-1zM95 318h1v1h-1zM95 328h1v1h-1zM95 348h1v1h-1zM95 358h1v1h-1zM95 368h1v1h-1zM95 378h1v1h-1zM95 398h1v1h-1zM95 408h1v1h-1zM95 418h1v1h-1zM95 428h1v1h-1zM135 48h1v1h-1zM135 58h1v1h-1zM135 68h1v1h-1zM135 78h1v1h-1zM135 98h1v1h-1zM135 108h1v1h-1zM135 118h1v1h-1zM135 128h1v1h-1zM135 148h1v1h-1zM135 158h1v1h-1zM135 168h1v1h-1zM135 178h1v1h-1zM135 198h1v1h-1zM135 208h1v1h-1zM135 218h1v1h-1zM135 228h1v1h-1zM135 248h1v1h-1zM135 258h1v1h-1zM135 268h1v1h-1zM135 278h1v1h-1zM135 298h1v1h-1zM135 308h1v1h-1zM135 318h1v1h-1zM135 328h1v1h-1zM135 348h1v1h-1zM135 358h1v1h-1zM135 368h1v1h-1zM135 378h1v1h-1zM135 398h1v1h-1zM135 408h1v1h-1zM135 418h1v1h-1zM135 428h1v1h-1zM175 48h1v1h-1zM175 58h1v1h-1zM175 68h1v1h-1zM175 78h1v1h-1zM175 98h1v1h-1zM175 108h1v1h-1zM175 118h1v1h-1zM175 128h1v1h-1zM175 148h1v1h-1zM175 158h1v1h-1zM175 168h1v1h-1zM175 178h1v1h-1zM175 198h1v1h-1zM175 208h1v1h-1zM175 218h1v1h-1zM175 228h1v1h-1zM175 248h1v1h-1zM175 258h1v1h-1zM175 268h1v1h-1zM175 278h1v1h-1zM175 298h1v1h-1zM175 308h1v1h-1zM175 318h1v1h-1zM175 328h1v1h-1zM175 348h1v1h-1zM175 358h1v1h-1zM175 368h1v1h-1zM175 378h1v1h-1zM175 398h1v1h-1zM175 408h1v1h-1zM175 418h1v1h-1zM175 428h1v1h-1zM215 48h1v1h-1zM215 58h1v1h-1zM215 68h1v1h-1zM215 78h1v1h-1zM215 98h1v1h-1zM215 108h1v1h-1zM215 118h1v1h-1zM215 128h1v1h-1zM215 148h1v1h-1zM215 158h1v1h-1zM215 168h1v1h-1zM215 178h1v1h-1zM215 198h1v1h-1zM215 208h1v1h-1zM215 218h1v1h-1zM215 228h1v1h-1zM215 248h1v1h-1zM215 258h1v1h-1zM215 268h1v1h-1zM215 278h1v1h-1zM215 298h1v1h-1zM215 308h1v1h-1zM215 318h1v1h-1zM215 328h1v1h-1zM215 348h1v1h-1zM215 358h1v1h-1zM215 368h1v1h-1zM215 378h1v1h-1zM215 398h1v1h-1zM215 408h1v1h-1zM215 418h1v1h-1zM215 428h1v1h-1zM255 48h1v1h-1zM255 58h1v1h-1zM255 68h1v1h-1zM255 78h1v1h-1zM255 98h1v1h-1zM255 108h1v1h-1zM255 118h1v1h-1zM255 128h1v1h-1zM255 148h1v1h-1zM255 158h1v1h-1zM255 168h1v1h-1zM255 178h1v1h-1zM255 198h1v1h-1zM255 208h1v1h-1zM255 218h1v1h-1zM255 228h1v1h-1zM255 248h1v1h-1zM255 258h1v1h-1zM255 268h1v1h-1zM255 278h1v1h-1zM255 298h1v1h-1zM255 308h1v1h-1zM255 318h1v1h-1zM255 328h1v1h-1zM255 348h1v1h-1zM255 358h1v1h-1zM255 368h1v1h-1zM255 378h1v1h-1zM255 398h1v1h-1zM255 408h1v1h-1zM255 418h1v1h-1zM255 428h1v1h-1zM295 48h1v1h-1zM295 58h1v1h-1zM295 68h1v1h-1zM295 78h1v1h-1zM295 98h1v1h-1zM295 108h1v1h-1zM295 118h1v1h-1zM295 128h1v1h-1zM295 148h1v1h-1zM295 158h1v1h-1zM295 168h1v1h-1zM295 178h1v1h-1zM295 198h1v1h-1zM295 208h1v1h-1zM295 218h1v1h-1zM295 228h1v1h-1zM295 248h1v1h-1zM295 258h1v1h-1zM295 268h1v1h-1zM295 278h1v1h-1zM295 298h1v1h-1zM295 308h1v1h-1zM295 318h1v1h-1zM295 328h1v1h-1zM295 348h1v1h-1zM295 358h1v1h-1zM295 368h1v1h-1zM295 378h1v1h-1zM295 398h1v1h-1zM295 408h1v1h-1zM295 418h1v1h-1zM295 428h1v1h-1zM375 48h1v1h-1zM375 58h1v1h-1zM375 68h1v1h-1zM375 78h1v1h-1zM375 98h1v1h-1zM375 108h1v1h-1zM375 118h1v1h-1zM375 128h1v1h-1zM375 148h1v1h-1zM375 158h1v1h-1zM375 168h1v1h-1zM375 178h1v1h-1zM375 198h1v1h-1zM375 208h1v1h-1zM375 218h1v1h-1zM375 228h1v1h-1zM375 248h1v1h-1zM375 258h1v1h-1zM375 268h1v1h-1zM375 278h1v1h-1zM375 298h1v1h-1zM375 308h1v1h-1zM375 318h1v1h-1zM375 328h1v1h-1zM375 348h1v1h-1zM375 358h1v1h-1zM375 368h1v1h-1zM375 378h1v1h-1zM375 398h1v1h-1zM375 408h1v1h-1zM375 418h1v1h-1zM375 428h1v1h-1zM415 48h1v1h-1zM415 58h1v1h-1zM415 68h1v1h-1zM415 78h1v1h-1zM415 98h1v1h-1zM415 108h1v1h-1zM415 118h1v1h-1zM415 128h1v1h-1zM415 148h1v1h-1zM415 158h1v1h-1zM415 168h1v1h-1zM415 178h1v1h-1zM415 198h1v1h-1zM415 208h1v1h-1zM415 218h1v1h-1zM415 228h1v1h-1zM415 248h1v1h-1zM415 258h1v1h-1zM415 268h1v1h-1zM415 278h1v1h-1zM415 298h1v1h-1zM415 308h1v1h-1zM415 318h1v1h-1zM415 328h1v1h-1zM415 348h1v1h-1zM415 358h1v1h-1zM415 368h1v1h-1zM415 378h1v1h-1zM415 398h1v1h-1zM415 408h1v1h-1zM415 418h1v1h-1zM415 428h1v1h-1zM455 48h1v1h-1zM455 58h1v1h-1zM455 68h1v1h-1zM455 78h1v1h-1zM455 98h1v1h-1zM455 108h1v1h-1zM455 118h1v1h-1zM455 128h1v1h-1zM455 148h1v1h-1zM455 158h1v1h-1zM455 168h1v1h-1zM455 178h1v1h-1zM455 198h1v1h-1zM455 208h1v1h-1zM455 218h1v1h-1zM455 228h1v1h-1zM455 248h1v1h-1zM455 258h1v1h-1zM455 268h1v1h-1zM455 278h1v1h-1zM455 298h1v1h-1zM455 308h1v1h-1zM455 318h1v1h-1zM455 328h1v1h-1zM455 348h1v1h-1zM455 358h1v1h-1zM455 368h1v1h-1zM455 378h1v1h-1zM455 398h1v1h-1zM455 408h1v1h-1zM455 418h1v1h-1zM455 428h1v1h-1zM495 48h1v1h-1zM495 58h1v1h-1zM495 68h1v1h-1zM495 78h1v1h-1zM495 98h1v1h-1zM495 108h1v1h-1zM495 118h1v1h-1zM495 128h1v1h-1zM495 148h1v1h-1zM495 158h1v1h-1zM495 168h1v1h-1zM495 178h1v1h-1zM495 198h1v1h-1zM495 208h1v1h-1zM495 218h1v1h-1zM495 228h1v1h-1zM495 248h1v1h-1zM495 258h1v1h-1zM495 268h1v1h-1zM495 278h1v1h-1zM495 298h1v1h-1zM495 308h1v1h-1zM495 318h1v1h-1zM495 328h1v1h-1zM495 348h1v1h-1zM495 358h1v1h-1zM495 368h1v1h-1zM495 378h1v1h-1zM495 398h1v1h-1zM495 408h1v1h-1zM495 418h1v1h-1zM495 428h1v1h-1zM535 48h1v1h-1zM535 58h1v1h-1zM535 68h1v1h-1zM535 78h1v1h-1zM535 98h1v1h-1zM535 108h1v1h-1zM535 118h1v1h-1zM535 128h1v1h-1zM535 148h1v1h-1zM535 158h1v1h-1zM535 168h1v1h-1zM535 178h1v1h-1zM535 198h1v1h-1zM535 208h1v1h-1zM535 218h1v1h-1zM535 228h1v1h-1zM535 248h1v1h-1zM535 258h1v1h-1zM535 268h1v1h-1zM535 278h1v1h-1zM535 298h1v1h-1zM535 308h1v1h-1zM535 318h1v1h-1zM535 328h1v1h-1zM535 348h1v1h-1zM535 358h1v1h-1zM535 368h1v1h-1zM535 378h1v1h-1zM535 398h1v1h-1zM535 408h1v1h-1zM535 418h1v1h-1zM535 428h1v1h-1zM575 48h1v1h-1zM575 58h1v1h-1zM575 68h1v1h-1zM575 78h1v1h-1zM575 98h1v1h-1zM575 108h1v1h-1zM575 118h1v1h-1zM575 128h1v1h-1zM575 148h1v1h-1zM575 158h1v1h-1zM575 168h1v1h-1zM575 178h1v1h-1zM575 198h1v1h-1zM575 208h1v1h-1zM575 218h1v1h-1zM575 228h1v1h-1zM575 248h1v1h-1zM575 258h1v1h-1zM575 268h1v1h-1zM575 278h1v1h-1zM575 298h1v1h-1zM575 308h1v1h-1zM575 318h1v1h-1zM575 328h1v1h-1zM575 348h1v1h-1zM575 358h1v1h-1zM575 368h1v1h-1zM575 378h1v1h-1zM575 398h1v1h-1zM575 408h1v1h-1zM575 418h1v1h-1zM575 428h1v1h-1zM615 48h1v1h-1zM615 58h1v1h-1zM615 68h1v1h-1zM615 78h1v1h-1zM615 98h1v1h-1zM615 108h1v1h-1zM615 118h1v1h-1zM615 128h1v1h-1zM615 148h1v1h-1zM615 158h1v1h-1zM615 168h1v1h-1zM615 178h1v1h-1zM615 198h1v1h-1zM615 208h1v1h-1zM615 218h1v1h-1zM615 228h1v1h-1zM615 248h1v1h-1zM615 258h1v1h-1zM615 268h1v1h-1zM615 278h1v1h-1zM615 298h1v1h-1zM615 308h1v1h-1zM615 318h1v1h-1zM615 328h1v1h-1zM615 348h1v1h-1zM615 358h1v1h-1zM615 368h1v1h-1zM615 378h1v1h-1zM615 398h1v1h-1zM615 408h1v1h-1zM615 418h1v1h-1zM615 428h1v1h-1zM655 48h1v1h-1zM655 58h1v1h-1zM655 68h1v1h-1zM655 78h1v1h-1zM655 98h1v1h-1zM655 108h1v1h-1zM655 118h1v1h-1zM655 128h1v1h-1zM655 148h1v1h-1zM655 158h1v1h-1zM655 168h1v1h-1zM655 178h1v1h-1zM655 198h1v1h-1zM655 208h1v1h-1zM655 218h1v1h-1zM655 228h1v1h-1zM655 248h1v1h-1zM655 258h1v1h-1zM655 268h1v1h-1zM655 278h1v1h-1zM655 298h1v1h-1zM655 308h1v1h-1zM655 318h1v1h-1zM655 328h1v1h-1zM655 348h1v1h-1zM655 358h1v1h-1zM655 368h1v1h-1zM655 378h1v1h-1zM655 398h1v1h-1zM655 408h1v1h-1zM655 418h1v1h-1zM655 428h1v1h-1z" fill="#747474"/>
<rect x="16" y="238" width="640" height="1" fill="#5e605e"/>
<rect x="335" y="29" width="1" height="419" fill="#5e605e"/>
<path d="M23 235h1v7h-1zM31 235h1v7h-1zM39 235h1v7h-1zM47 235h1v7h-1zM55 235h1v7h-1zM63 235h1v7h-1zM71 235h1v7h-1zM79 235h1v7h-1zM87 235h1v7h-1zM95 235h1v7h-1zM103 235h1v7h-1zM111 235h1v7h-1zM119 235h1v7h-1zM127 235h1v7h-1zM135 235h1v7h-1zM143 235h1v7h-1zM151 235h1v7h-1zM159 235h1v7h-1zM167 235h1v7h-1zM175 235h1v7h-1zM183 235h1v7h-1zM191 235h1v7h-1zM199 235h1v7h-1zM207 235h1v7h-1zM215 235h1v7h-1zM223 235h1v7h-1zM231 235h1v7h-1zM239 235h1v7h-1zM247 235h1v7h-1zM255 235h1v7h-1zM263 235h1v7h-1zM271 235h1v7h-1zM279 235h1v7h-1zM287 235h1v7h-1zM295 235h1v7h-1zM303 235h1v7h-1zM311 235h1v7h-1zM319 235h1v7h-1zM327 235h1v7h-1zM335 235h1v7h-1zM343 235h1v7h-1zM351 235h1v7h-1zM359 235h1v7h-1zM367 235h1v7h-1zM375 235h1v7h-1zM383 235h1v7h-1zM391 235h1v7h-1zM399 235h1v7h-1zM407 235h1v7h-1zM415 235h1v7h-1zM423 235h1v7h-1zM431 235h1v7h-1zM439 235h1v7h-1zM447 235h1v7h-1zM455 235h1v7h-1zM463 235h1v7h-1zM471 235h1v7h-1zM479 235h1v7h-1zM487 235h1v7h-1zM495 235h1v7h-1zM503 235h1v7h-1zM511 235h1v7h-1zM519 235h1v7h-1zM527 235h1v7h-1zM535 235h1v7h-1zM543 235h1v7h-1zM551 235h1v7h-1zM559 235h1v7h-1zM567 235h1v7h-1zM575 235h1v7h-1zM583 235h1v7h-1zM591 235h1v7h-1zM599 235h1v7h-1zM607 235h1v7h-1zM615 235h1v7h-1zM623 235h1v7h-1zM631 235h1v7h-1zM639 235h1v7h-1zM647 235h1v7h-1zM655 235h1v7h-1zM332 38h7v1h-7zM332 48h7v1h-7zM332 58h7v1h-7zM332 68h7v1h-7zM332 78h7v1h-7zM332 88h7v1h-7zM332 98h7v1h-7zM332 108h7v1h-7zM332 118h7v1h-7zM332 128h7v1h-7zM332 138h7v1h-7zM332 148h7v1h-7zM332 158h7v1h-7zM332 168h7v1h-7zM332 178h7v1h-7zM332 188h7v1h-7zM332 198h7v1h-7zM332 208h7v1h-7zM332 218h7v1h-7zM332 228h7v1h-7zM332 238h7v1h-7zM332 248h7v1h-7zM332 258h7v1h-7zM332 268h7v1h-7zM332 278h7v1h-7zM332 288h7v1h-7zM332 298h7v1h-7zM332 308h7v1h-7zM332 318h7v1h-7zM332 328h7v1h-7zM332 338h7v1h-7zM332 348h7v1h-7zM332 358h7v1h-7zM332 368h7v1h-7zM332 378h7v1h-7zM332 388h7v1h-7zM332 398h7v1h-7zM332 408h7v1h-7zM332 418h7v1h-7zM332 428h7v1h-7zM332 438h7v1h-7z" fill="#5e605e"/>
<path d="M64 28h1v2h-1zM65 28h1v2h-1zM66 28h1v2h-1zM67 28h1v3h-1zM68 28h1v6h-1zM69 28h1v4h-1zM70 28h1v5h-1zM71 28h1v7h-1zM72 30h1v6h-1zM73 31h1v4h-1zM74 32h1v4h-1zM75 32h1v6h-1zM76 33h1v6h-1zM77 33h1v7h-1zM78 35h1v6h-1zM79 36h1v8h-1zM80 37h1v5h-1zM81 37h1v6h-1zM82 38h1v7h-1zM83 40h1v6h-1zM84 41h1v5h-1zM85 41h1v7h-1zM86 43h1v8h-1zM87 44h1v8h-1zM88 45h1v6h-1zM89 47h1v5h-1zM90 47h1v7h-1zM91 48h1v6h-1zM92 50h1v6h-1zM93 51h1v6h-1zM94 52h1v7h-1zM95 53h1v7h-1zM96 55h1v8h-1zM97 56h1v6h-1zM98 56h1v8h-1zM99 58h1v7h-1zM100 61h1v5h-1zM101 60h1v7h-1zM102 62h1v7h-1zM103 64h1v6h-1zM104 65h1v7h-1zM105 67h1v6h-1zM106 67h1v7h-1zM107 70h1v6h-1zM108 71h1v6h-1zM109 72h1v6h-1zM110 75h1v7h-1zM111 73h1v8h-1zM112 77h1v6h-1zM113 79h1v5h-1zM114 79h1v7h-1zM115 81h1v8h-1zM116 83h1v7h-1zM117 85h1v6h-1zM118 87h1v5h-1zM119 87h1v7h-1zM120 88h1v8h-1zM121 91h1v6h-1zM122 93h1v7h-1zM123 94h1v7h-1zM124 96h1v6h-1zM125 97h1v6h-1zM126 98h1v8h-1zM127 100h1v7h-1zM128 101h1v8h-1zM129 104h1v6h-1zM130 106h1v6h-1zM131 107h1v6h-1zM132 108h1v7h-1zM133 110h1v6h-1zM134 111h1v7h-1zM135 114h1v5h-1zM136 115h1v7h-1zM137 115h1v9h-1zM138 118h1v9h-1zM139 120h1v6h-1zM140 122h1v6h-1zM141 123h1v7h-1zM142 125h1v7h-1zM143 126h1v7h-1zM144 129h1v8h-1zM145 130h1v6h-1zM146 132h1v6h-1zM147 133h1v9h-1zM148 133h1v9h-1zM149 136h1v7h-1zM150 138h1v7h-1zM151 139h1v9h-1zM152 141h1v7h-1zM153 143h1v6h-1zM154 144h1v6h-1zM155 144h1v9h-1zM156 146h1v9h-1zM157 149h1v7h-1zM158 151h1v6h-1zM159 150h1v8h-1zM160 154h1v6h-1zM161 155h1v6h-1zM162 157h1v6h-1zM163 157h1v8h-1zM164 160h1v6h-1zM165 161h1v6h-1zM166 164h1v5h-1zM167 165h1v5h-1zM168 166h1v5h-1zM169 167h1v7h-1zM170 168h1v6h-1zM171 170h1v7h-1zM172 172h1v5h-1zM173 173h1v6h-1zM174 172h1v8h-1zM175 176h1v5h-1zM176 177h1v6h-1zM177 179h1v6h-1zM178 178h1v10h-1zM179 181h1v5h-1zM180 182h1v6h-1zM181 183h1v6h-1zM182 184h1v7h-1zM183 185h1v7h-1zM184 186h1v7h-1zM185 188h1v6h-1zM186 189h1v5h-1zM187 191h1v5h-1zM188 190h1v9h-1zM189 191h1v7h-1zM190 192h1v7h-1zM191 195h1v6h-1zM192 194h1v7h-1zM193 197h1v6h-1zM194 197h1v7h-1zM195 198h1v8h-1zM196 199h1v6h-1zM197 201h1v6h-1zM198 202h1v5h-1zM199 201h1v7h-1zM200 203h1v6h-1zM201 203h1v8h-1zM202 205h1v5h-1zM203 206h1v6h-1zM204 206h1v6h-1zM205 207h1v6h-1zM206 208h1v5h-1zM207 208h1v5h-1zM208 209h1v5h-1zM209 209h1v7h-1zM210 210h1v6h-1zM211 211h1v5h-1zM212 209h1v7h-1zM213 212h1v5h-1zM214 212h1v5h-1zM215 211h1v7h-1zM216 213h1v5h-1zM217 212h1v6h-1zM218 214h1v5h-1zM219 214h1v6h-1zM220 215h1v4h-1zM221 215h1v5h-1zM222 216h1v6h-1zM223 216h1v5h-1zM224 216h1v4h-1zM225 216h1v5h-1zM226 216h1v8h-1zM227 216h1v6h-1zM228 217h1v5h-1zM229 215h1v7h-1zM230 217h1v4h-1zM231 217h1v5h-1zM232 217h1v6h-1zM233 217h1v5h-1zM234 217h1v6h-1zM235 218h1v4h-1zM236 217h1v6h-1zM237 216h1v5h-1zM238 217h1v4h-1zM239 217h1v6h-1zM240 217h1v4h-1zM241 217h1v4h-1zM242 215h1v8h-1zM243 216h1v5h-1zM244 215h1v6h-1zM245 215h1v6h-1zM246 215h1v5h-1zM247 215h1v5h-1zM248 215h1v5h-1zM249 214h1v5h-1zM250 214h1v4h-1zM251 213h1v4h-1zM252 213h1v4h-1zM253 213h1v5h-1zM254 211h1v6h-1zM255 211h1v7h-1zM256 211h1v6h-1zM257 208h1v7h-1zM258 209h1v6h-1zM259 208h1v6h-1zM260 207h1v6h-1zM261 205h1v8h-1zM262 207h1v4h-1zM263 204h1v9h-1zM264 205h1v5h-1zM265 204h1v5h-1zM266 204h1v4h-1zM267 201h1v7h-1zM268 202h1v5h-1zM269 201h1v5h-1zM270 200h1v7h-1zM271 199h1v8h-1zM272 199h1v6h-1zM273 197h1v6h-1zM274 197h1v7h-1zM275 195h1v6h-1zM276 195h1v5h-1zM277 193h1v7h-1zM278 192h1v7h-1zM279 190h1v8h-1zM280 191h1v6h-1zM281 190h1v5h-1zM282 188h1v5h-1zM283 186h1v9h-1zM284 186h1v6h-1zM285 185h1v6h-1zM286 182h1v8h-1zM287 182h1v6h-1zM288 181h1v8h-1zM289 178h1v8h-1zM290 178h1v7h-1zM291 177h1v6h-1zM292 177h1v6h-1zM293 174h1v7h-1zM294 173h1v7h-1zM295 172h1v6h-1zM296 171h1v6h-1zM297 170h1v7h-1zM298 168h1v7h-1zM299 167h1v6h-1zM300 165h1v8h-1zM301 165h1v5h-1zM302 163h1v6h-1zM303 161h1v8h-1zM304 159h1v7h-1zM305 159h1v6h-1zM306 157h1v6h-1zM307 155h1v8h-1zM308 154h1v6h-1zM309 151h1v8h-1zM310 152h1v6h-1zM311 148h1v8h-1zM312 146h1v8h-1zM313 146h1v6h-1zM314 145h1v6h-1zM315 144h1v5h-1zM316 141h1v8h-1zM317 140h1v6h-1zM318 138h1v7h-1zM319 138h1v7h-1zM320 136h1v7h-1zM321 134h1v6h-1zM322 133h1v7h-1zM323 131h1v7h-1zM324 129h1v7h-1zM325 128h1v6h-1zM326 127h1v5h-1zM327 123h1v8h-1zM328 122h1v7h-1zM329 121h1v7h-1zM330 120h1v6h-1zM331 117h1v8h-1zM332 117h1v7h-1zM333 115h1v8h-1zM334 113h1v6h-1zM335 112h1v6h-1zM336 109h1v7h-1zM337 109h1v6h-1zM338 105h1v8h-1zM339 105h1v6h-1zM340 104h1v5h-1zM341 101h1v8h-1zM342 100h1v6h-1zM343 99h1v6h-1zM344 98h1v5h-1zM345 96h1v6h-1zM346 94h1v6h-1zM347 92h1v7h-1zM348 91h1v8h-1zM349 88h1v7h-1zM350 86h1v9h-1zM351 86h1v6h-1zM352 84h1v7h-1zM353 82h1v10h-1zM354 82h1v6h-1zM355 80h1v6h-1zM356 78h1v8h-1zM357 76h1v10h-1zM358 75h1v8h-1zM359 75h1v6h-1zM360 73h1v7h-1zM361 70h1v7h-1zM362 69h1v7h-1zM363 69h1v8h-1zM364 67h1v6h-1zM365 65h1v8h-1zM366 63h1v8h-1zM367 63h1v6h-1zM368 62h1v7h-1zM369 60h1v7h-1zM370 59h1v7h-1zM371 58h1v6h-1zM372 55h1v8h-1zM373 55h1v6h-1zM374 54h1v6h-1zM375 51h1v7h-1zM376 52h1v6h-1zM377 49h1v7h-1zM378 50h1v5h-1zM379 48h1v6h-1zM380 45h1v8h-1zM381 45h1v6h-1zM382 45h1v5h-1zM383 44h1v5h-1zM384 43h1v5h-1zM385 42h1v5h-1zM386 40h1v8h-1zM387 39h1v6h-1zM388 38h1v5h-1zM389 37h1v5h-1zM390 36h1v7h-1zM391 35h1v6h-1zM392 34h1v8h-1zM393 33h1v6h-1zM394 32h1v7h-1zM395 31h1v6h-1zM396 31h1v6h-1zM397 30h1v5h-1zM398 30h1v5h-1zM399 29h1v5h-1zM400 28h1v7h-1zM401 28h1v4h-1zM402 28h1v3h-1zM403 28h1v3h-1zM404 28h1v4h-1zM405 28h1v1h-1zM461 28h1v2h-1zM463 28h1v3h-1zM464 28h1v2h-1zM465 28h1v1h-1zM466 28h1v2h-1zM467 28h1v3h-1zM468 28h1v5h-1zM469 28h1v5h-1zM470 29h1v4h-1zM471 28h1v6h-1zM472 29h1v7h-1zM473 30h1v6h-1zM474 31h1v6h-1zM475 32h1v6h-1zM476 33h1v6h-1zM477 34h1v8h-1zM478 35h1v6h-1zM479 36h1v6h-1zM480 37h1v6h-1zM481 37h1v6h-1zM482 37h1v7h-1zM483 40h1v5h-1zM484 41h1v7h-1zM485 42h1v6h-1zM486 43h1v6h-1zM487 44h1v6h-1zM488 46h1v5h-1zM489 47h1v5h-1zM490 48h1v5h-1zM491 49h1v6h-1zM492 50h1v6h-1zM493 51h1v8h-1zM494 53h1v6h-1zM495 54h1v6h-1zM496 55h1v6h-1zM497 57h1v8h-1zM498 56h1v7h-1zM499 58h1v7h-1zM500 60h1v7h-1zM501 60h1v9h-1zM502 61h1v8h-1zM503 64h1v6h-1zM504 64h1v8h-1zM505 67h1v7h-1zM506 68h1v8h-1zM507 70h1v6h-1zM508 71h1v6h-1zM509 73h1v5h-1zM510 75h1v5h-1zM511 76h1v6h-1zM512 78h1v5h-1zM513 78h1v7h-1zM514 81h1v6h-1zM515 82h1v5h-1zM516 82h1v8h-1zM517 85h1v6h-1zM518 86h1v6h-1zM519 87h1v6h-1zM520 90h1v6h-1zM521 91h1v5h-1zM522 93h1v6h-1zM523 94h1v7h-1zM524 96h1v6h-1zM525 97h1v6h-1zM526 99h1v8h-1zM527 101h1v6h-1zM528 102h1v7h-1zM529 103h1v6h-1zM530 106h1v5h-1zM531 107h1v7h-1zM532 109h1v7h-1zM533 110h1v7h-1zM534 112h1v6h-1zM535 112h1v10h-1zM536 115h1v8h-1zM537 117h1v6h-1zM538 119h1v6h-1zM539 121h1v8h-1zM540 121h1v6h-1zM541 124h1v5h-1zM542 125h1v8h-1zM543 127h1v5h-1zM544 129h1v6h-1zM545 130h1v7h-1zM546 132h1v6h-1zM547 134h1v6h-1zM548 135h1v6h-1zM549 137h1v6h-1zM550 139h1v8h-1zM551 140h1v6h-1zM552 140h1v7h-1zM553 143h1v8h-1zM554 145h1v6h-1zM555 146h1v6h-1zM556 147h1v7h-1zM557 149h1v6h-1zM558 151h1v6h-1zM559 151h1v7h-1zM560 154h1v7h-1zM561 155h1v7h-1zM562 157h1v7h-1zM563 158h1v6h-1zM564 160h1v6h-1zM565 161h1v8h-1zM566 161h1v8h-1zM567 162h1v10h-1zM568 165h1v7h-1zM569 167h1v7h-1zM570 167h1v7h-1zM571 170h1v6h-1zM572 170h1v7h-1zM573 172h1v7h-1zM574 175h1v6h-1zM575 175h1v6h-1zM576 177h1v5h-1zM577 178h1v8h-1zM578 179h1v6h-1zM579 181h1v6h-1zM580 182h1v6h-1zM581 184h1v5h-1zM582 184h1v7h-1zM583 186h1v6h-1zM584 186h1v7h-1zM585 188h1v6h-1zM586 189h1v6h-1zM587 190h1v5h-1zM588 190h1v7h-1zM589 193h1v5h-1zM590 193h1v6h-1zM591 194h1v7h-1zM592 194h1v7h-1zM593 197h1v6h-1zM594 198h1v6h-1zM595 199h1v6h-1zM596 200h1v6h-1zM597 200h1v6h-1zM598 201h1v6h-1zM599 202h1v6h-1zM600 203h1v5h-1zM601 203h1v7h-1zM602 204h1v6h-1zM603 205h1v6h-1zM604 207h1v5h-1zM605 206h1v7h-1zM606 208h1v5h-1zM607 208h1v7h-1zM608 209h1v6h-1zM609 209h1v6h-1zM610 211h1v5h-1zM611 210h1v5h-1zM612 211h1v6h-1zM613 210h1v7h-1zM614 212h1v5h-1zM615 213h1v5h-1zM616 213h1v5h-1zM617 213h1v5h-1zM618 214h1v6h-1zM619 213h1v7h-1zM620 215h1v5h-1zM621 214h1v6h-1zM622 215h1v5h-1zM623 216h1v5h-1zM624 216h1v5h-1zM625 217h1v4h-1zM626 216h1v5h-1zM627 217h1v6h-1zM628 217h1v4h-1zM629 215h1v7h-1zM630 217h1v5h-1zM631 217h1v6h-1zM632 218h1v4h-1zM633 218h1v3h-1zM634 216h1v8h-1zM635 218h1v4h-1zM636 217h1v5h-1zM637 217h1v5h-1zM638 217h1v4h-1zM639 217h1v4h-1zM640 217h1v4h-1zM641 216h1v5h-1zM642 216h1v5h-1zM643 216h1v5h-1zM644 216h1v6h-1zM645 213h1v7h-1zM646 215h1v5h-1zM647 215h1v5h-1zM648 212h1v8h-1zM649 214h1v5h-1zM650 211h1v9h-1zM651 212h1v6h-1zM652 213h1v5h-1zM653 213h1v4h-1zM654 212h1v5h-1zM655 210h1v6h-1z" fill="#ffff00"/>
<path d="M16 132h1v5h-1zM17 132h1v5h-1zM18 132h1v5h-1zM19 132h1v5h-1zM20 132h1v7h-1zM21 132h1v6h-1zM22 132h1v5h-1zM23 131h1v6h-1zM24 132h1v5h-1zM25 132h1v5h-1zM26 130h1v7h-1zM27 131h1v9h-1zM28 131h1v6h-1zM29 132h1v5h-1zM30 132h1v7h-1zM31 129h1v8h-1zM32 132h1v5h-1zM33 132h1v7h-1zM34 132h1v7h-1zM35 132h1v5h-1zM36 132h1v7h-1zM37 130h1v8h-1zM38 130h1v8h-1zM39 132h1v5h-1zM40 132h1v6h-1zM41 131h1v6h-1zM42 129h1v8h-1zM43 131h1v6h-1zM44 132h1v5h-1zM45 131h1v7h-1zM46 130h1v9h-1zM47 132h1v5h-1zM48 131h1v8h-1zM49 132h1v5h-1zM50 132h1v5h-1zM51 132h1v6h-1zM52 131h1v9h-1zM53 132h1v5h-1zM54 132h1v5h-1zM55 132h1v7h-1zM56 132h1v7h-1zM57 131h1v7h-1zM58 132h1v6h-1zM59 131h1v7h-1zM60 132h1v6h-1zM61 132h1v5h-1zM62 132h1v5h-1zM63 132h1v5h-1zM64 131h1v7h-1zM65 129h1v8h-1zM66 132h1v5h-1zM67 129h1v8h-1zM68 132h1v5h-1zM69 132h1v5h-1zM70 132h1v5h-1zM71 130h1v10h-1zM72 132h1v5h-1zM73 132h1v5h-1zM74 131h1v8h-1zM75 132h1v6h-1zM76 132h1v5h-1zM77 131h1v6h-1zM78 130h1v7h-1zM79 132h1v7h-1zM80 132h1v7h-1zM81 132h1v8h-1zM82 131h1v8h-1zM83 131h1v8h-1zM84 130h1v9h-1zM85 131h1v7h-1zM86 132h1v5h-1zM87 132h1v7h-1zM88 131h1v8h-1zM89 132h1v6h-1zM90 132h1v6h-1zM91 132h1v5h-1zM92 132h1v6h-1zM93 129h1v9h-1zM94 130h1v9h-1zM95 132h1v6h-1zM96 130h1v7h-1zM97 132h1v8h-1zM98 132h1v8h-1zM99 132h1v5h-1zM100 132h1v5h-1zM101 132h1v5h-1zM102 131h1v6h-1zM103 130h1v7h-1zM104 132h1v5h-1zM105 131h1v8h-1zM106 132h1v5h-1zM107 130h1v9h-1zM108 132h1v6h-1zM109 131h1v7h-1zM110 132h1v5h-1zM111 132h1v7h-1zM112 132h1v5h-1zM113 129h1v10h-1zM114 131h1v7h-1zM115 130h1v8h-1zM116 132h1v6h-1zM117 130h1v7h-1zM118 132h1v5h-1zM119 131h1v8h-1zM120 132h1v5h-1zM121 131h1v8h-1zM122 131h1v9h-1zM123 131h1v7h-1zM124 132h1v6h-1zM125 132h1v7h-1zM126 132h1v5h-1zM127 132h1v6h-1zM128 132h1v5h-1zM129 131h1v8h-1zM130 131h1v7h-1zM131 130h1v9h-1zM132 132h1v5h-1zM133 131h1v6h-1zM134 132h1v6h-1zM135 131h1v6h-1zM136 132h1v5h-1zM137 130h1v10h-1zM138 132h1v5h-1zM139 130h1v7h-1zM140 132h1v5h-1zM141 130h1v7h-1zM142 132h1v7h-1zM143 130h1v7h-1zM144 132h1v5h-1zM145 132h1v7h-1zM146 131h1v6h-1zM147 131h1v8h-1zM148 131h1v9h-1zM149 132h1v5h-1zM150 132h1v6h-1zM151 131h1v6h-1zM152 129h1v10h-1zM153 130h1v9h-1zM154 132h1v8h-1zM155 130h1v7h-1zM156 132h1v5h-1zM157 131h1v6h-1zM158 130h1v8h-1zM159 132h1v5h-1zM160 131h1v8h-1zM161 132h1v6h-1zM162 131h1v6h-1zM163 132h1v6h-1zM164 131h1v7h-1zM165 132h1v7h-1zM166 132h1v6h-1zM167 131h1v7h-1zM168 132h1v7h-1zM169 132h1v5h-1zM170 131h1v6h-1zM171 130h1v8h-1zM172 132h1v5h-1zM173 130h1v7h-1zM174 132h1v5h-1zM175 133h1v73h-1zM176 203h1v11h-1zM177 210h1v5h-1zM178 213h1v8h-1zM179 216h1v5h-1zM180 217h1v8h-1zM181 220h1v4h-1zM182 222h1v3h-1zM183 221h1v5h-1zM184 222h1v4h-1zM185 223h1v6h-1zM186 225h1v4h-1zM187 224h1v4h-1zM188 225h1v2h-1zM189 224h1v9h-1zM190 225h1v5h-1zM191 223h1v10h-1zM192 225h1v5h-1zM193 225h1v5h-1zM194 222h1v9h-1zM195 223h1v7h-1zM196 225h1v5h-1zM197 224h1v8h-1zM198 225h1v6h-1zM199 224h1v6h-1zM200 225h1v5h-1zM201 225h1v5h-1zM202 225h1v5h-1zM203 225h1v8h-1zM204 223h1v9h-1zM205 225h1v6h-1zM206 225h1v7h-1zM207 223h1v7h-1zM208 225h1v5h-1zM209 225h1v6h-1zM210 225h1v8h-1zM211 225h1v5h-1zM212 224h1v7h-1zM213 225h1v6h-1zM214 222h1v10h-1zM215 224h1v6h-1zM216 225h1v6h-1zM217 224h1v6h-1zM218 225h1v5h-1zM219 223h1v8h-1zM220 224h1v6h-1zM221 225h1v5h-1zM222 224h1v6h-1zM223 225h1v5h-1zM224 225h1v5h-1zM225 224h1v6h-1zM226 224h1v6h-1zM227 224h1v6h-1zM228 225h1v5h-1zM229 224h1v8h-1zM230 225h1v5h-1zM231 222h1v8h-1zM232 224h1v6h-1zM233 225h1v5h-1zM234 225h1v5h-1zM235 224h1v7h-1zM236 224h1v8h-1zM237 223h1v7h-1zM238 224h1v8h-1zM239 223h1v8h-1zM240 223h1v9h-1zM241 224h1v6h-1zM242 224h1v6h-1zM243 225h1v5h-1zM244 225h1v5h-1zM245 225h1v5h-1zM246 223h1v7h-1zM247 224h1v6h-1zM248 224h1v6h-1zM249 223h1v7h-1zM250 223h1v7h-1zM251 224h1v7h-1zM252 225h1v5h-1zM253 225h1v5h-1zM254 223h1v9h-1zM255 225h1v6h-1zM256 225h1v5h-1zM257 224h1v6h-1zM258 225h1v5h-1zM259 225h1v5h-1zM260 223h1v7h-1zM261 225h1v7h-1zM262 225h1v5h-1zM263 224h1v6h-1zM264 225h1v5h-1zM265 225h1v5h-1zM266 223h1v8h-1zM267 225h1v6h-1zM268 225h1v5h-1zM269 222h1v8h-1zM270 224h1v8h-1zM271 224h1v8h-1zM272 225h1v5h-1zM273 224h1v7h-1zM274 224h1v6h-1zM275 225h1v5h-1zM276 223h1v9h-1zM277 224h1v6h-1zM278 225h1v7h-1zM279 222h1v8h-1zM280 224h1v6h-1zM281 225h1v6h-1zM282 222h1v8h-1zM283 224h1v6h-1zM284 225h1v5h-1zM285 225h1v6h-1zM286 225h1v7h-1zM287 222h1v9h-1zM288 225h1v7h-1zM289 225h1v7h-1zM290 224h1v7h-1zM291 225h1v6h-1zM292 224h1v6h-1zM293 223h1v8h-1zM294 225h1v5h-1zM295 225h1v5h-1zM296 225h1v5h-1zM297 224h1v7h-1zM298 225h1v6h-1zM299 225h1v5h-1zM300 225h1v5h-1zM301 225h1v5h-1zM302 224h1v8h-1zM303 225h1v5h-1zM304 224h1v8h-1zM305 225h1v7h-1zM306 224h1v7h-1zM307 225h1v5h-1zM308 223h1v9h-1zM309 223h1v8h-1zM310 223h1v7h-1zM311 225h1v6h-1zM312 225h1v5h-1zM313 224h1v8h-1zM314 224h1v6h-1zM315 224h1v6h-1zM316 224h1v8h-1zM317 224h1v6h-1zM318 223h1v7h-1zM319 223h1v7h-1zM320 225h1v5h-1zM321 224h1v7h-1zM322 224h1v8h-1zM323 224h1v6h-1zM324 225h1v5h-1zM325 133h1v96h-1zM326 132h1v8h-1zM327 130h1v8h-1zM328 131h1v7h-1zM329 132h1v5h-1zM330 132h1v6h-1zM331 129h1v9h-1zM332 132h1v5h-1zM333 132h1v6h-1zM334 132h1v5h-1zM335 132h1v5h-1zM336 131h1v7h-1zM337 132h1v5h-1zM338 132h1v5h-1zM339 131h1v7h-1zM340 131h1v8h-1zM341 131h1v6h-1zM342 132h1v7h-1zM343 132h1v5h-1zM344 132h1v5h-1zM345 130h1v7h-1zM346 130h1v8h-1zM347 131h1v8h-1zM348 132h1v8h-1zM349 129h1v8h-1zM350 131h1v6h-1zM351 131h1v6h-1zM352 130h1v7h-1zM353 131h1v6h-1zM354 129h1v9h-1zM355 132h1v6h-1zM356 132h1v7h-1zM357 132h1v6h-1zM358 132h1v5h-1zM359 130h1v7h-1zM360 131h1v7h-1zM361 132h1v5h-1zM362 131h1v7h-1zM363 132h1v5h-1zM364 132h1v5h-1zM365 132h1v5h-1zM366 131h1v6h-1zM367 131h1v6h-1zM368 132h1v7h-1zM369 132h1v7h-1zM370 132h1v5h-1zM371 132h1v5h-1zM372 130h1v7h-1zM373 132h1v5h-1zM374 132h1v7h-1zM375 130h1v8h-1zM376 129h1v11h-1zM377 131h1v6h-1zM378 132h1v7h-1zM379 131h1v7h-1zM380 132h1v6h-1zM381 131h1v7h-1zM382 132h1v5h-1zM383 130h1v10h-1zM384 130h1v7h-1zM385 131h1v7h-1zM386 130h1v9h-1zM387 132h1v5h-1zM388 132h1v5h-1zM389 129h1v10h-1zM390 132h1v6h-1zM391 132h1v5h-1zM392 131h1v7h-1zM393 131h1v7h-1zM394 132h1v7h-1zM395 132h1v5h-1zM396 131h1v8h-1zM397 132h1v6h-1zM398 132h1v6h-1zM399 131h1v6h-1zM400 132h1v7h-1zM401 131h1v6h-1zM402 131h1v8h-1zM403 132h1v7h-1zM404 131h1v6h-1zM405 131h1v8h-1zM406 130h1v9h-1zM407 132h1v7h-1zM408 131h1v6h-1zM409 131h1v6h-1zM410 132h1v6h-1zM411 132h1v5h-1zM412 130h1v7h-1zM413 132h1v5h-1zM414 131h1v8h-1zM415 132h1v5h-1zM416 130h1v7h-1zM417 132h1v5h-1zM418 131h1v6h-1zM419 130h1v7h-1zM420 131h1v7h-1zM421 132h1v5h-1zM422 129h1v8h-1zM423 130h1v7h-1zM424 131h1v7h-1zM425 129h1v8h-1zM426 131h1v6h-1zM427 131h1v6h-1zM428 129h1v8h-1zM429 130h1v9h-1zM430 130h1v10h-1zM431 132h1v6h-1zM432 132h1v6h-1zM433 132h1v6h-1zM434 132h1v7h-1zM435 131h1v9h-1zM436 132h1v6h-1zM437 132h1v5h-1zM438 131h1v6h-1zM439 130h1v9h-1zM440 131h1v7h-1zM441 132h1v6h-1zM442 132h1v5h-1zM443 132h1v5h-1zM444 132h1v5h-1zM445 130h1v8h-1zM446 132h1v8h-1zM447 132h1v7h-1zM448 132h1v6h-1zM449 129h1v8h-1zM450 132h1v5h-1zM451 132h1v5h-1zM452 132h1v5h-1zM453 132h1v5h-1zM454 131h1v6h-1zM455 131h1v6h-1zM456 132h1v6h-1zM457 132h1v5h-1zM458 131h1v6h-1zM459 132h1v5h-1zM460 131h1v6h-1zM461 131h1v6h-1zM462 132h1v5h-1zM463 131h1v8h-1zM464 131h1v6h-1zM465 132h1v7h-1zM466 132h1v7h-1zM467 132h1v7h-1zM468 132h1v6h-1zM469 131h1v6h-1zM470 131h1v6h-1zM471 131h1v6h-1zM472 130h1v7h-1zM473 132h1v5h-1zM474 129h1v9h-1zM475 132h1v5h-1zM476 132h1v5h-1zM477 132h1v5h-1zM478 132h1v7h-1zM479 132h1v7h-1zM480 131h1v6h-1zM481 132h1v5h-1zM482 132h1v5h-1zM483 131h1v8h-1zM484 132h1v6h-1zM485 131h1v6h-1zM486 132h1v6h-1zM487 132h1v5h-1zM488 131h1v6h-1zM489 132h1v5h-1zM490 130h1v7h-1zM491 130h1v7h-1zM492 132h1v8h-1zM493 132h1v5h-1zM494 132h1v5h-1zM495 132h1v5h-1zM496 131h1v6h-1zM497 132h1v5h-1zM498 129h1v8h-1zM499 132h1v7h-1zM500 130h1v7h-1zM501 131h1v8h-1zM502 132h1v5h-1zM503 131h1v8h-1zM504 130h1v7h-1zM505 131h1v6h-1zM506 132h1v5h-1zM507 132h1v6h-1zM508 131h1v6h-1zM509 132h1v7h-1zM510 132h1v8h-1zM511 131h1v6h-1zM512 131h1v6h-1zM513 132h1v6h-1zM514 131h1v6h-1zM515 132h1v6h-1zM516 132h1v7h-1zM517 132h1v7h-1zM518 131h1v9h-1zM519 132h1v5h-1zM520 132h1v6h-1zM521 132h1v7h-1zM522 132h1v7h-1zM523 132h1v5h-1zM524 130h1v9h-1zM525 129h1v9h-1zM526 132h1v6h-1zM527 129h1v8h-1zM528 132h1v5h-1zM529 131h1v7h-1zM530 132h1v6h-1zM531 132h1v7h-1zM532 132h1v5h-1zM533 131h1v6h-1zM534 132h1v5h-1zM535 129h1v8h-1zM536 131h1v7h-1zM537 130h1v7h-1zM538 131h1v7h-1zM539 132h1v6h-1zM540 132h1v7h-1zM541 130h1v7h-1zM542 132h1v5h-1zM543 132h1v5h-1zM544 129h1v8h-1zM545 130h1v7h-1zM546 132h1v5h-1zM547 132h1v5h-1zM548 131h1v7h-1zM549 132h1v5h-1zM550 131h1v6h-1zM551 132h1v6h-1zM552 130h1v7h-1zM553 132h1v5h-1zM554 131h1v8h-1zM555 131h1v9h-1zM556 131h1v8h-1zM557 129h1v9h-1zM558 131h1v6h-1zM559 131h1v7h-1zM560 132h1v5h-1zM561 132h1v7h-1zM562 131h1v8h-1zM563 132h1v7h-1zM564 131h1v6h-1zM565 132h1v7h-1zM566 131h1v7h-1zM567 132h1v5h-1zM568 130h1v9h-1zM569 129h1v9h-1zM570 130h1v7h-1zM571 132h1v5h-1zM572 132h1v5h-1zM573 130h1v10h-1zM574 129h1v8h-1zM575 133h1v73h-1zM576 204h1v7h-1zM577 210h1v6h-1zM578 214h1v6h-1zM579 215h1v6h-1zM580 219h1v4h-1zM581 220h1v5h-1zM582 223h1v2h-1zM583 223h1v3h-1zM584 224h1v3h-1zM585 225h1v2h-1zM586 225h1v4h-1zM587 225h1v3h-1zM588 225h1v4h-1zM589 225h1v5h-1zM590 223h1v7h-1zM591 225h1v5h-1zM592 225h1v8h-1zM593 223h1v7h-1zM594 225h1v5h-1zM595 223h1v7h-1zM596 224h1v7h-1zM597 223h1v9h-1zM598 225h1v5h-1zM599 225h1v5h-1zM600 224h1v7h-1zM601 223h1v10h-1zM602 225h1v5h-1zM603 225h1v6h-1zM604 223h1v9h-1zM605 225h1v5h-1zM606 225h1v6h-1zM607 225h1v5h-1zM608 224h1v6h-1zM609 225h1v5h-1zM610 224h1v6h-1zM611 225h1v5h-1zM612 223h1v9h-1zM613 224h1v6h-1zM614 224h1v7h-1zM615 225h1v8h-1zM616 225h1v5h-1zM617 225h1v5h-1zM618 225h1v5h-1zM619 222h1v8h-1zM620 224h1v6h-1zM621 225h1v5h-1zM622 224h1v7h-1zM623 225h1v6h-1zM624 224h1v6h-1zM625 224h1v7h-1zM626 225h1v5h-1zM627 225h1v5h-1zM628 224h1v7h-1zM629 224h1v7h-1zM630 225h1v7h-1zM631 224h1v7h-1zM632 223h1v7h-1zM633 224h1v6h-1zM634 223h1v7h-1zM635 225h1v7h-1zM636 225h1v6h-1zM637 225h1v6h-1zM638 224h1v6h-1zM639 225h1v6h-1zM640 225h1v6h-1zM641 225h1v6h-1zM642 225h1v5h-1zM643 224h1v6h-1zM644 225h1v6h-1zM645 225h1v5h-1zM646 225h1v5h-1zM647 225h1v5h-1zM648 224h1v6h-1zM649 224h1v8h-1zM650 225h1v6h-1zM651 225h1v6h-1zM652 225h1v5h-1zM653 225h1v5h-1zM654 225h1v5h-1zM655 225h1v5h-1z" fill="#00ffff"/>
<path d="M84 28h1v1h-1zM85 28h1v2h-1zM86 28h1v3h-1zM87 28h1v5h-1zM88 28h1v5h-1zM89 29h1v6h-1zM90 28h1v7h-1zM91 30h1v7h-1zM92 32h1v7h-1zM93 34h1v5h-1zM94 34h1v7h-1zM95 35h1v10h-1zM96 37h1v6h-1zM97 38h1v6h-1zM98 40h1v8h-1zM99 41h1v6h-1zM100 43h1v6h-1zM101 43h1v7h-1zM102 46h1v6h-1zM103 47h1v6h-1zM104 49h1v6h-1zM105 50h1v7h-1zM106 51h1v9h-1zM107 53h1v8h-1zM108 54h1v7h-1zM109 56h1v7h-1zM110 57h1v7h-1zM111 59h1v7h-1zM112 60h1v7h-1zM113 62h1v7h-1zM114 61h1v9h-1zM115 65h1v7h-1zM116 66h1v7h-1zM117 68h1v7h-1zM118 70h1v6h-1zM119 71h1v9h-1zM120 72h1v7h-1zM121 73h1v10h-1zM122 76h1v8h-1zM123 76h1v8h-1zM124 79h1v7h-1zM125 81h1v7h-1zM126 83h1v7h-1zM127 83h1v7h-1zM128 85h1v7h-1zM129 87h1v7h-1zM130 88h1v9h-1zM131 91h1v9h-1zM132 92h1v8h-1zM133 94h1v6h-1zM134 95h1v8h-1zM135 96h1v8h-1zM136 99h1v6h-1zM137 101h1v6h-1zM138 102h1v8h-1zM139 103h1v8h-1zM140 105h1v10h-1zM141 108h1v5h-1zM142 109h1v7h-1zM143 108h1v9h-1zM144 112h1v7h-1zM145 115h1v5h-1zM146 115h1v7h-1zM147 117h1v7h-1zM148 117h1v9h-1zM149 121h1v7h-1zM150 122h1v7h-1zM151 124h1v6h-1zM152 125h1v9h-1zM153 127h1v8h-1zM154 128h1v8h-1zM155 130h1v7h-1zM156 132h1v7h-1zM157 134h1v6h-1zM158 133h1v8h-1zM159 136h1v8h-1zM160 138h1v7h-1zM161 137h1v11h-1zM162 142h1v6h-1zM163 142h1v9h-1zM164 145h1v8h-1zM165 144h1v8h-1zM166 146h1v10h-1zM167 149h1v7h-1zM168 151h1v7h-1zM169 153h1v5h-1zM170 154h1v8h-1zM171 156h1v5h-1zM172 156h1v8h-1zM173 156h1v10h-1zM174 159h1v7h-1zM175 159h1v9h-1zM176 162h1v8h-1zM177 164h1v6h-1zM178 166h1v5h-1zM179 167h1v5h-1zM180 169h1v5h-1zM181 169h1v7h-1zM182 171h1v7h-1zM183 172h1v8h-1zM184 172h1v8h-1zM185 174h1v7h-1zM186 175h1v8h-1zM187 177h1v6h-1zM188 177h1v8h-1zM189 178h1v8h-1zM190 180h1v6h-1zM191 182h1v6h-1zM192 183h1v7h-1zM193 184h1v7h-1zM194 186h1v6h-1zM195 186h1v9h-1zM196 188h1v6h-1zM197 189h1v6h-1zM198 191h1v5h-1zM199 191h1v6h-1zM200 191h1v8h-1zM201 194h1v6h-1zM202 194h1v6h-1zM203 196h1v5h-1zM204 195h1v7h-1zM205 196h1v8h-1zM206 199h1v5h-1zM207 199h1v7h-1zM208 200h1v5h-1zM209 201h1v5h-1zM210 202h1v5h-1zM211 202h1v8h-1zM212 203h1v8h-1zM213 204h1v7h-1zM214 203h1v7h-1zM215 206h1v5h-1zM216 206h1v5h-1zM217 207h1v7h-1zM218 207h1v7h-1zM219 206h1v10h-1zM220 209h1v8h-1zM221 210h1v5h-1zM222 210h1v5h-1zM223 211h1v6h-1zM224 209h1v10h-1zM225 212h1v5h-1zM226 212h1v6h-1zM227 212h1v8h-1zM228 213h1v5h-1zM229 213h1v6h-1zM230 214h1v7h-1zM231 213h1v6h-1zM232 214h1v7h-1zM233 212h1v10h-1zM234 215h1v5h-1zM235 215h1v4h-1zM236 215h1v5h-1zM237 215h1v5h-1zM238 215h1v6h-1zM239 216h1v4h-1zM240 215h1v6h-1zM241 216h1v5h-1zM242 215h1v5h-1zM243 216h1v4h-1zM244 216h1v4h-1zM245 215h1v6h-1zM246 216h1v4h-1zM247 215h1v8h-1zM248 215h1v5h-1zM249 215h1v4h-1zM250 214h1v5h-1zM251 212h1v8h-1zM252 214h1v5h-1zM253 213h1v5h-1zM254 213h1v5h-1zM255 211h1v8h-1zM256 211h1v6h-1zM257 213h1v4h-1zM258 209h1v8h-1zM259 210h1v7h-1zM260 210h1v7h-1zM261 210h1v5h-1zM262 208h1v7h-1zM263 209h1v5h-1zM264 208h1v6h-1zM265 207h1v6h-1zM266 207h1v6h-1zM267 205h1v7h-1zM268 205h1v8h-1zM269 205h1v5h-1zM270 204h1v5h-1zM271 202h1v7h-1zM272 202h1v8h-1zM273 202h1v5h-1zM274 200h1v6h-1zM275 200h1v6h-1zM276 198h1v7h-1zM277 198h1v5h-1zM278 197h1v6h-1zM279 195h1v7h-1zM280 194h1v7h-1zM281 194h1v6h-1zM282 193h1v6h-1zM283 192h1v5h-1zM284 191h1v5h-1zM285 189h1v9h-1zM286 189h1v6h-1zM287 187h1v8h-1zM288 185h1v7h-1zM289 185h1v5h-1zM290 183h1v6h-1zM291 182h1v8h-1zM292 181h1v6h-1zM293 177h1v8h-1zM294 179h1v5h-1zM295 176h1v8h-1zM296 176h1v6h-1zM297 175h1v5h-1zM298 173h1v7h-1zM299 171h1v7h-1zM300 171h1v5h-1zM301 168h1v7h-1zM302 168h1v7h-1zM303 165h1v8h-1zM304 165h1v5h-1zM305 163h1v7h-1zM306 161h1v7h-1zM307 160h1v6h-1zM308 157h1v8h-1zM309 157h1v6h-1zM310 155h1v7h-1zM311 154h1v8h-1zM312 151h1v8h-1zM313 151h1v7h-1zM314 150h1v6h-1zM315 146h1v8h-1zM316 146h1v6h-1zM317 144h1v7h-1zM318 142h1v7h-1zM319 141h1v8h-1zM320 139h1v8h-1zM321 138h1v7h-1zM322 136h1v7h-1zM323 135h1v6h-1zM324 134h1v5h-1zM325 130h1v9h-1zM326 129h1v7h-1zM327 128h1v9h-1zM328 127h1v7h-1zM329 125h1v7h-1zM330 123h1v7h-1zM331 122h1v7h-1zM332 120h1v9h-1zM333 119h1v6h-1zM334 116h1v7h-1zM335 114h1v8h-1zM336 114h1v7h-1zM337 113h1v6h-1zM338 111h1v6h-1zM339 109h1v7h-1zM340 107h1v6h-1zM341 104h1v9h-1zM342 104h1v6h-1zM343 102h1v8h-1zM344 100h1v7h-1zM345 98h1v9h-1zM346 98h1v6h-1zM347 95h1v8h-1zM348 94h1v6h-1zM349 92h1v7h-1zM350 91h1v7h-1zM351 89h1v6h-1zM352 88h1v6h-1zM353 85h1v9h-1zM354 84h1v7h-1zM355 82h1v8h-1zM356 81h1v7h-1zM357 80h1v6h-1zM358 78h1v9h-1zM359 74h1v10h-1zM360 75h1v6h-1zM361 73h1v7h-1zM362 72h1v8h-1zM363 68h1v11h-1zM364 69h1v6h-1zM365 68h1v5h-1zM366 66h1v6h-1zM367 64h1v7h-1zM368 61h1v7h-1zM369 61h1v6h-1zM370 58h1v10h-1zM371 58h1v7h-1zM372 57h1v6h-1zM373 54h1v8h-1zM374 52h1v9h-1zM375 52h1v6h-1zM376 49h1v10h-1zM377 50h1v5h-1zM378 49h1v6h-1zM379 45h1v9h-1zM380 45h1v7h-1zM381 44h1v6h-1zM382 43h1v8h-1zM383 42h1v6h-1zM384 40h1v8h-1zM385 37h1v8h-1zM386 37h1v7h-1zM387 37h1v5h-1zM388 35h1v7h-1zM389 32h1v8h-1zM390 31h1v8h-1zM391 32h1v7h-1zM392 29h1v7h-1zM393 29h1v7h-1zM394 28h1v6h-1zM395 28h1v5h-1zM396 28h1v3h-1zM397 28h1v2h-1zM398 28h1v1h-1zM399 28h1v1h-1zM401 28h1v1h-1zM483 28h1v1h-1zM484 28h1v2h-1zM485 28h1v3h-1zM486 28h1v3h-1zM487 28h1v5h-1zM488 28h1v5h-1zM489 28h1v6h-1zM490 29h1v6h-1zM491 31h1v6h-1zM492 31h1v9h-1zM493 34h1v5h-1zM494 35h1v6h-1zM495 36h1v9h-1zM496 38h1v6h-1zM497 38h1v7h-1zM498 39h1v7h-1zM499 41h1v6h-1zM500 43h1v6h-1zM501 42h1v10h-1zM502 46h1v8h-1zM503 45h1v8h-1zM504 48h1v7h-1zM505 50h1v6h-1zM506 51h1v7h-1zM507 53h1v6h-1zM508 54h1v8h-1zM509 56h1v6h-1zM510 57h1v7h-1zM511 57h1v8h-1zM512 60h1v7h-1zM513 61h1v7h-1zM514 63h1v7h-1zM515 65h1v7h-1zM516 66h1v7h-1zM517 69h1v6h-1zM518 69h1v7h-1zM519 71h1v7h-1zM520 73h1v7h-1zM521 75h1v6h-1zM522 76h1v7h-1zM523 77h1v8h-1zM524 78h1v7h-1zM525 79h1v8h-1zM526 83h1v6h-1zM527 84h1v7h-1zM528 85h1v8h-1zM529 88h1v6h-1zM530 89h1v7h-1zM531 89h1v8h-1zM532 91h1v8h-1zM533 94h1v7h-1zM534 95h1v8h-1zM535 97h1v7h-1zM536 98h1v8h-1zM537 100h1v8h-1zM538 101h1v8h-1zM539 104h1v7h-1zM540 106h1v8h-1zM541 108h1v6h-1zM542 109h1v9h-1zM543 109h1v8h-1zM544 111h1v8h-1zM545 112h1v9h-1zM546 115h1v8h-1zM547 117h1v7h-1zM548 119h1v7h-1zM549 121h1v7h-1zM550 122h1v7h-1zM551 123h1v8h-1zM552 125h1v7h-1zM553 127h1v7h-1zM554 129h1v7h-1zM555 131h1v6h-1zM556 132h1v8h-1zM557 133h1v9h-1zM558 135h1v8h-1zM559 136h1v7h-1zM560 137h1v8h-1zM561 140h1v7h-1zM562 141h1v7h-1zM563 143h1v6h-1zM564 144h1v6h-1zM565 146h1v6h-1zM566 148h1v6h-1zM567 150h1v6h-1zM568 150h1v7h-1zM569 153h1v7h-1zM570 154h1v6h-1zM571 155h1v9h-1zM572 157h1v6h-1zM573 158h1v7h-1zM574 160h1v6h-1zM575 162h1v5h-1zM576 162h1v6h-1zM577 163h1v7h-1zM578 163h1v8h-1zM579 167h1v7h-1zM580 168h1v7h-1zM581 169h1v6h-1zM582 169h1v8h-1zM583 171h1v9h-1zM584 172h1v8h-1zM585 174h1v7h-1zM586 177h1v5h-1zM587 176h1v7h-1zM588 178h1v6h-1zM589 180h1v6h-1zM590 180h1v8h-1zM591 182h1v6h-1zM592 182h1v8h-1zM593 183h1v7h-1zM594 185h1v7h-1zM595 187h1v6h-1zM596 188h1v6h-1zM597 187h1v8h-1zM598 190h1v6h-1zM599 191h1v7h-1zM600 191h1v8h-1zM601 193h1v7h-1zM602 194h1v6h-1zM603 195h1v6h-1zM604 197h1v5h-1zM605 197h1v5h-1zM606 196h1v9h-1zM607 200h1v5h-1zM608 200h1v8h-1zM609 199h1v8h-1zM610 201h1v6h-1zM611 202h1v7h-1zM612 204h1v5h-1zM613 204h1v7h-1zM614 205h1v6h-1zM615 206h1v5h-1zM616 206h1v6h-1zM617 207h1v5h-1zM618 207h1v5h-1zM619 206h1v7h-1zM620 209h1v6h-1zM621 207h1v7h-1zM622 209h1v7h-1zM623 211h1v6h-1zM624 211h1v6h-1zM625 211h1v6h-1zM626 211h1v7h-1zM627 210h1v7h-1zM628 213h1v5h-1zM629 213h1v5h-1zM630 213h1v6h-1zM631 214h1v6h-1zM632 214h1v5h-1zM633 215h1v4h-1zM634 214h1v6h-1zM635 215h1v5h-1zM636 214h1v7h-1zM637 216h1v6h-1zM638 214h1v6h-1zM639 216h1v4h-1zM640 216h1v4h-1zM641 215h1v7h-1zM642 214h1v6h-1zM643 215h1v6h-1zM644 216h1v4h-1zM645 213h1v9h-1zM646 215h1v5h-1zM647 215h1v4h-1zM648 214h1v6h-1zM649 215h1v5h-1zM650 215h1v6h-1zM651 213h1v8h-1zM652 213h1v5h-1zM653 214h1v4h-1zM654 213h1v6h-1zM655 212h1v6h-1z" fill="#ff1a00"/>
<path d="M16 143h1v6h-1zM17 142h1v7h-1zM18 142h1v7h-1zM19 141h1v11h-1zM20 143h1v6h-1zM21 139h1v10h-1zM22 143h1v6h-1zM23 140h1v9h-1zM24 142h1v7h-1zM25 144h1v7h-1zM26 143h1v6h-1zM27 143h1v7h-1zM28 141h1v8h-1zM29 143h1v8h-1zM30 143h1v9h-1zM31 143h1v10h-1zM32 140h1v10h-1zM33 143h1v6h-1zM34 143h1v6h-1zM35 144h1v7h-1zM36 144h1v6h-1zM37 144h1v7h-1zM38 143h1v9h-1zM39 144h1v6h-1zM40 145h1v5h-1zM41 144h1v7h-1zM42 144h1v9h-1zM43 144h1v6h-1zM44 143h1v9h-1zM45 145h1v9h-1zM46 145h1v5h-1zM47 142h1v11h-1zM48 145h1v7h-1zM49 145h1v6h-1zM50 142h1v9h-1zM51 143h1v11h-1zM52 145h1v6h-1zM53 145h1v6h-1zM54 144h1v7h-1zM55 145h1v6h-1zM56 146h1v5h-1zM57 145h1v7h-1zM58 146h1v8h-1zM59 145h1v7h-1zM60 145h1v10h-1zM61 146h1v5h-1zM62 146h1v7h-1zM63 146h1v9h-1zM64 145h1v7h-1zM65 146h1v6h-1zM66 146h1v6h-1zM67 143h1v11h-1zM68 146h1v6h-1zM69 143h1v10h-1zM70 143h1v13h-1zM71 147h1v5h-1zM72 147h1v8h-1zM73 147h1v6h-1zM74 147h1v5h-1zM75 143h1v10h-1zM76 147h1v7h-1zM77 146h1v7h-1zM78 147h1v6h-1zM79 147h1v7h-1zM80 147h1v7h-1zM81 147h1v7h-1zM82 147h1v7h-1zM83 148h1v6h-1zM84 147h1v8h-1zM85 146h1v10h-1zM86 145h1v11h-1zM87 146h1v10h-1zM88 146h1v10h-1zM89 148h1v7h-1zM90 148h1v8h-1zM91 148h1v7h-1zM92 149h1v6h-1zM93 149h1v6h-1zM94 148h1v9h-1zM95 149h1v10h-1zM96 147h1v11h-1zM97 149h1v8h-1zM98 149h1v7h-1zM99 149h1v7h-1zM100 150h1v6h-1zM101 149h1v6h-1zM102 149h1v6h-1zM103 150h1v6h-1zM104 150h1v6h-1zM105 147h1v9h-1zM106 150h1v6h-1zM107 150h1v6h-1zM108 150h1v7h-1zM109 150h1v7h-1zM110 151h1v5h-1zM111 150h1v6h-1zM112 148h1v9h-1zM113 151h1v5h-1zM114 151h1v9h-1zM115 151h1v6h-1zM116 151h1v9h-1zM117 151h1v6h-1zM118 151h1v6h-1zM119 152h1v5h-1zM120 148h1v12h-1zM121 149h1v9h-1zM122 150h1v8h-1zM123 152h1v8h-1zM124 150h1v11h-1zM125 153h1v5h-1zM126 152h1v9h-1zM127 151h1v7h-1zM128 152h1v10h-1zM129 152h1v8h-1zM130 151h1v11h-1zM131 152h1v6h-1zM132 153h1v6h-1zM133 153h1v5h-1zM134 153h1v6h-1zM135 153h1v6h-1zM136 152h1v8h-1zM137 151h1v9h-1zM138 153h1v7h-1zM139 153h1v6h-1zM140 153h1v7h-1zM141 151h1v12h-1zM142 153h1v6h-1zM143 154h1v5h-1zM144 154h1v6h-1zM145 151h1v10h-1zM146 150h1v12h-1zM147 154h1v6h-1zM148 151h1v11h-1zM149 154h1v10h-1zM150 151h1v10h-1zM151 154h1v7h-1zM152 154h1v9h-1zM153 154h1v7h-1zM154 152h1v11h-1zM155 151h1v12h-1zM156 152h1v8h-1zM157 152h1v9h-1zM158 155h1v6h-1zM159 152h1v8h-1zM160 155h1v5h-1zM161 155h1v6h-1zM162 155h1v6h-1zM163 156h1v5h-1zM164 152h1v13h-1zM165 155h1v9h-1zM166 155h1v6h-1zM167 156h1v5h-1zM168 155h1v6h-1zM169 156h1v6h-1zM170 156h1v7h-1zM171 153h1v8h-1zM172 154h1v9h-1zM173 154h1v9h-1zM174 155h1v7h-1zM175 153h1v9h-1zM176 156h1v9h-1zM177 156h1v5h-1zM178 156h1v6h-1zM179 156h1v6h-1zM180 156h1v6h-1zM181 153h1v9h-1zM182 156h1v5h-1zM183 153h1v9h-1zM184 154h1v8h-1zM185 155h1v7h-1zM186 153h1v9h-1zM187 156h1v8h-1zM188 157h1v6h-1zM189 155h1v9h-1zM190 156h1v6h-1zM191 156h1v6h-1zM192 156h1v6h-1zM193 156h1v6h-1zM194 156h1v8h-1zM195 153h1v9h-1zM196 153h1v12h-1zM197 156h1v8h-1zM198 156h1v6h-1zM199 156h1v6h-1zM200 154h1v9h-1zM201 156h1v6h-1zM202 155h1v7h-1zM203 153h1v11h-1zM204 153h1v9h-1zM205 156h1v6h-1zM206 156h1v6h-1zM207 156h1v6h-1zM208 156h1v7h-1zM209 156h1v6h-1zM210 155h1v10h-1zM211 156h1v6h-1zM212 156h1v5h-1zM213 156h1v8h-1zM214 156h1v6h-1zM215 156h1v6h-1zM216 153h1v8h-1zM217 155h1v9h-1zM218 156h1v6h-1zM219 156h1v6h-1zM220 155h1v10h-1zM221 156h1v6h-1zM222 156h1v5h-1zM223 154h1v7h-1zM224 156h1v5h-1zM225 153h1v9h-1zM226 155h1v8h-1zM227 153h1v9h-1zM228 155h1v7h-1zM229 153h1v12h-1zM230 156h1v6h-1zM231 153h1v11h-1zM232 155h1v6h-1zM233 154h1v7h-1zM234 155h1v6h-1zM235 155h1v6h-1zM236 155h1v10h-1zM237 153h1v7h-1zM238 154h1v6h-1zM239 155h1v6h-1zM240 154h1v6h-1zM241 152h1v8h-1zM242 153h1v8h-1zM243 153h1v8h-1zM244 154h1v6h-1zM245 154h1v7h-1zM246 153h1v7h-1zM247 154h1v8h-1zM248 154h1v8h-1zM249 152h1v8h-1zM250 153h1v10h-1zM251 154h1v6h-1zM252 151h1v8h-1zM253 154h1v5h-1zM254 151h1v11h-1zM255 154h1v6h-1zM256 153h1v6h-1zM257 154h1v5h-1zM258 151h1v9h-1zM259 151h1v8h-1zM260 152h1v7h-1zM261 153h1v6h-1zM262 152h1v7h-1zM263 153h1v6h-1zM264 153h1v6h-1zM265 152h1v7h-1zM266 152h1v9h-1zM267 151h1v7h-1zM268 151h1v7h-1zM269 152h1v6h-1zM270 153h1v5h-1zM271 152h1v6h-1zM272 152h1v5h-1zM273 150h1v8h-1zM274 152h1v6h-1zM275 150h1v10h-1zM276 149h1v9h-1zM277 151h1v6h-1zM278 149h1v8h-1zM279 152h1v5h-1zM280 151h1v9h-1zM281 151h1v6h-1zM282 151h1v6h-1zM283 148h1v9h-1zM284 150h1v7h-1zM285 149h1v11h-1zM286 149h1v7h-1zM287 150h1v6h-1zM288 150h1v7h-1zM289 150h1v10h-1zM290 150h1v6h-1zM291 150h1v7h-1zM292 150h1v6h-1zM293 150h1v6h-1zM294 150h1v6h-1zM295 149h1v7h-1zM296 149h1v6h-1zM297 150h1v5h-1zM298 146h1v12h-1zM299 147h1v8h-1zM300 149h1v6h-1zM301 148h1v7h-1zM302 148h1v6h-1zM303 145h1v10h-1zM304 147h1v8h-1zM305 145h1v11h-1zM306 147h1v8h-1zM307 145h1v9h-1zM308 147h1v10h-1zM309 148h1v6h-1zM310 148h1v5h-1zM311 148h1v6h-1zM312 147h1v7h-1zM313 148h1v5h-1zM314 148h1v9h-1zM315 148h1v8h-1zM316 148h1v5h-1zM317 144h1v12h-1zM318 148h1v5h-1zM319 146h1v7h-1zM320 147h1v6h-1zM321 146h1v7h-1zM322 147h1v6h-1zM323 147h1v6h-1zM324 146h1v7h-1zM325 144h1v8h-1zM326 146h1v7h-1zM327 146h1v6h-1zM328 146h1v6h-1zM329 144h1v8h-1zM330 145h1v7h-1zM331 146h1v9h-1zM332 145h1v10h-1zM333 145h1v6h-1zM334 146h1v6h-1zM335 142h1v13h-1zM336 145h1v6h-1zM337 145h1v6h-1zM338 145h1v6h-1zM339 145h1v6h-1zM340 145h1v7h-1zM341 142h1v12h-1zM342 144h1v10h-1zM343 143h1v8h-1zM344 144h1v7h-1zM345 144h1v10h-1zM346 145h1v8h-1zM347 144h1v6h-1zM348 142h1v9h-1zM349 144h1v8h-1zM350 144h1v6h-1zM351 142h1v8h-1zM352 145h1v7h-1zM353 144h1v6h-1zM354 141h1v10h-1zM355 144h1v6h-1zM356 142h1v8h-1zM357 143h1v7h-1zM358 144h1v6h-1zM359 143h1v7h-1zM360 140h1v10h-1zM361 143h1v7h-1zM362 140h1v12h-1zM363 142h1v7h-1zM364 142h1v7h-1zM365 143h1v8h-1zM366 143h1v9h-1zM367 143h1v7h-1zM368 143h1v9h-1zM369 143h1v6h-1zM370 144h1v8h-1zM371 143h1v9h-1zM372 143h1v6h-1zM373 143h1v8h-1zM374 143h1v5h-1zM375 142h1v7h-1zM376 140h1v9h-1zM377 143h1v6h-1zM378 143h1v6h-1zM379 143h1v6h-1zM380 143h1v6h-1zM381 142h1v7h-1zM382 141h1v9h-1zM383 140h1v9h-1zM384 143h1v5h-1zM385 142h1v7h-1zM386 143h1v5h-1zM387 142h1v6h-1zM388 143h1v6h-1zM389 142h1v6h-1zM390 142h1v7h-1zM391 142h1v9h-1zM392 143h1v8h-1zM393 142h1v9h-1zM394 140h1v12h-1zM395 143h1v6h-1zM396 141h1v8h-1zM397 143h1v5h-1zM398 139h1v11h-1zM399 142h1v7h-1zM400 142h1v6h-1zM401 143h1v5h-1zM402 143h1v8h-1zM403 140h1v10h-1zM404 142h1v7h-1zM405 143h1v8h-1zM406 143h1v6h-1zM407 142h1v7h-1zM408 140h1v9h-1zM409 142h1v6h-1zM410 143h1v6h-1zM411 142h1v7h-1zM412 143h1v6h-1zM413 140h1v11h-1zM414 143h1v6h-1zM415 142h1v9h-1zM416 143h1v6h-1zM417 142h1v7h-1zM418 143h1v8h-1zM419 142h1v9h-1zM420 140h1v9h-1zM421 142h1v10h-1zM422 141h1v8h-1zM423 143h1v6h-1zM424 143h1v7h-1zM425 143h1v6h-1zM426 143h1v6h-1zM427 143h1v9h-1zM428 143h1v6h-1zM429 144h1v6h-1zM430 140h1v9h-1zM431 144h1v6h-1zM432 143h1v6h-1zM433 143h1v6h-1zM434 143h1v6h-1zM435 143h1v9h-1zM436 143h1v7h-1zM437 144h1v5h-1zM438 144h1v6h-1zM439 143h1v7h-1zM440 145h1v5h-1zM441 144h1v8h-1zM442 144h1v6h-1zM443 144h1v6h-1zM444 145h1v9h-1zM445 143h1v7h-1zM446 144h1v7h-1zM447 143h1v7h-1zM448 142h1v10h-1zM449 142h1v8h-1zM450 145h1v8h-1zM451 145h1v9h-1zM452 145h1v6h-1zM453 145h1v8h-1zM454 146h1v5h-1zM455 145h1v6h-1zM456 144h1v11h-1zM457 142h1v11h-1zM458 142h1v10h-1zM459 145h1v8h-1zM460 142h1v11h-1zM461 146h1v6h-1zM462 145h1v6h-1zM463 146h1v6h-1zM464 145h1v7h-1zM465 146h1v6h-1zM466 146h1v6h-1zM467 146h1v7h-1zM468 146h1v6h-1zM469 144h1v9h-1zM470 146h1v9h-1zM471 146h1v10h-1zM472 146h1v7h-1zM473 147h1v5h-1zM474 145h1v8h-1zM475 147h1v5h-1zM476 147h1v9h-1zM477 147h1v6h-1zM478 147h1v6h-1zM479 148h1v5h-1zM480 146h1v7h-1zM481 146h1v8h-1zM482 146h1v8h-1zM483 148h1v6h-1zM484 145h1v9h-1zM485 148h1v9h-1zM486 148h1v6h-1zM487 149h1v6h-1zM488 148h1v6h-1zM489 149h1v5h-1zM490 145h1v12h-1zM491 149h1v5h-1zM492 146h1v9h-1zM493 148h1v8h-1zM494 146h1v9h-1zM495 149h1v8h-1zM496 149h1v6h-1zM497 149h1v6h-1zM498 149h1v7h-1zM499 146h1v13h-1zM500 149h1v10h-1zM501 149h1v9h-1zM502 150h1v6h-1zM503 150h1v7h-1zM504 150h1v6h-1zM505 150h1v7h-1zM506 150h1v6h-1zM507 150h1v6h-1zM508 151h1v9h-1zM509 150h1v7h-1zM510 150h1v7h-1zM511 150h1v9h-1zM512 148h1v9h-1zM513 151h1v6h-1zM514 148h1v9h-1zM515 151h1v6h-1zM516 152h1v7h-1zM517 148h1v9h-1zM518 150h1v8h-1zM519 151h1v7h-1zM520 151h1v7h-1zM521 152h1v6h-1zM522 150h1v8h-1zM523 151h1v7h-1zM524 153h1v5h-1zM525 150h1v11h-1zM526 152h1v7h-1zM527 153h1v6h-1zM528 152h1v6h-1zM529 153h1v7h-1zM530 153h1v6h-1zM531 153h1v6h-1zM532 153h1v6h-1zM533 152h1v9h-1zM534 153h1v8h-1zM535 149h1v10h-1zM536 153h1v6h-1zM537 154h1v6h-1zM538 150h1v10h-1zM539 154h1v5h-1zM540 151h1v9h-1zM541 152h1v11h-1zM542 152h1v8h-1zM543 150h1v9h-1zM544 152h1v8h-1zM545 152h1v10h-1zM546 153h1v7h-1zM547 151h1v9h-1zM548 151h1v9h-1zM549 154h1v6h-1zM550 154h1v6h-1zM551 154h1v9h-1zM552 152h1v9h-1zM553 155h1v5h-1zM554 155h1v6h-1zM555 155h1v5h-1zM556 153h1v9h-1zM557 152h1v12h-1zM558 153h1v8h-1zM559 155h1v6h-1zM560 155h1v6h-1zM561 155h1v6h-1zM562 154h1v9h-1zM563 155h1v6h-1zM564 155h1v6h-1zM565 156h1v5h-1zM566 156h1v7h-1zM567 156h1v5h-1zM568 155h1v6h-1zM569 155h1v7h-1zM570 156h1v8h-1zM571 153h1v8h-1zM572 154h1v8h-1zM573 155h1v6h-1zM574 155h1v6h-1zM575 156h1v8h-1zM576 155h1v9h-1zM577 156h1v8h-1zM578 156h1v5h-1zM579 155h1v7h-1zM580 155h1v9h-1zM581 156h1v6h-1zM582 156h1v6h-1zM583 156h1v8h-1zM584 156h1v6h-1zM585 156h1v10h-1zM586 156h1v6h-1zM587 155h1v11h-1zM588 153h1v9h-1zM589 156h1v6h-1zM590 156h1v6h-1zM591 152h1v11h-1zM592 154h1v8h-1zM593 153h1v11h-1zM594 154h1v8h-1zM595 156h1v6h-1zM596 153h1v9h-1zM597 154h1v9h-1zM598 157h1v5h-1zM599 157h1v5h-1zM600 154h1v9h-1zM601 152h1v12h-1zM602 152h1v11h-1zM603 156h1v6h-1zM604 156h1v9h-1zM605 156h1v6h-1zM606 154h1v9h-1zM607 156h1v9h-1zM608 153h1v11h-1zM609 156h1v6h-1zM610 153h1v11h-1zM611 155h1v7h-1zM612 156h1v6h-1zM613 155h1v7h-1zM614 155h1v7h-1zM615 156h1v5h-1zM616 156h1v6h-1zM617 156h1v6h-1zM618 156h1v6h-1zM619 156h1v6h-1zM620 156h1v6h-1zM621 155h1v7h-1zM622 153h1v8h-1zM623 154h1v8h-1zM624 154h1v9h-1zM625 155h1v9h-1zM626 155h1v6h-1zM627 155h1v9h-1zM628 154h1v7h-1zM629 155h1v7h-1zM630 152h1v10h-1zM631 153h1v10h-1zM632 153h1v11h-1zM633 153h1v10h-1zM634 155h1v7h-1zM635 155h1v6h-1zM636 153h1v8h-1zM637 155h1v8h-1zM638 154h1v7h-1zM639 155h1v9h-1zM640 154h1v6h-1zM641 154h1v8h-1zM642 155h1v5h-1zM643 155h1v5h-1zM644 154h1v8h-1zM645 155h1v5h-1zM646 154h1v6h-1zM647 154h1v6h-1zM648 151h1v9h-1zM649 152h1v10h-1zM650 153h1v6h-1zM651 154h1v5h-1zM652 152h1v9h-1zM653 153h1v6h-1zM654 153h1v6h-1zM655 153h1v6h-1z" fill="#00ff00"/>

<!-- markers -->
<path d="M300 29h70v12l-3 3h-26l-6 7.5l-6-7.5h-26l-3-3z" fill="#a8d4ff"/>
<path d="M301 30h68v10.5l-2.5 2.5h-26l-5.5 6.5l-5.5-6.5h-26l-2.5-2.5z" fill="#3c68f6" shape-rendering="auto"/>
<path d="M0 232h9l6 6l-6 7h-9z" fill="#00ff00"/>
<path d="M643 128l13-7v15z" fill="#ffff00"/>

<!-- right panel -->
<rect x="656" y="0" width="144" height="480" fill="#b8b4b8"/>
<rect x="657" y="1" width="143" height="27" fill="#40443f"/>
<rect x="657" y="28" width="143" height="452" fill="#777777"/>
</svg>
<div class="abs" style="left:679px;top:2px;color:#fff;font-size:22px;line-height:24px;letter-spacing:-0.8px">UTILITY</div>

<div class="abs" style="left:311px;top:30px;color:#fff;font-size:16px;line-height:16px">0.000s</div>
<div class="abs" style="left:2px;top:233px;color:#3030f0;font-size:12.5px;line-height:13px;font-weight:bold">4</div>
<div class="abs" style="left:547px;top:3px;width:100px;height:21px;background:#000;border-radius:10px;border:1px solid #222"></div>
<div class="abs" style="left:568px;top:6px;color:#fff;font-size:18px;line-height:18px;letter-spacing:0.4px">2.00us</div>
<div class="abs" style="left:521px;top:3px;width:22px;color:#c8fafa;font-size:21px;line-height:21px;font-weight:bold;text-align:center">W</div>
<svg class="abs" style="left:777px;top:3px" width="21" height="21" viewBox="0 0 21 21"><rect width="21" height="21" fill="#ff3300"/><path d="M5.2 4L15.8 16M15.8 4L5.2 16" stroke="#fff" stroke-width="2.8" stroke-linecap="square"/></svg>
<svg class="abs" style="left:450px;top:454px" width="24" height="22" viewBox="0 0 24 22"><path d="M3 18.5h6.5l6-14h6" fill="none" stroke="#7ab8ff" stroke-width="2"/></svg>

<div class="btn" style="top:64px;height:42px;padding-top:4px;line-height:18.6px">System<br>Status</div>
<div class="btn" style="top:145px;height:42px;padding-top:4px;line-height:18.6px">Update<br>Firmware</div>
<div class="btn" style="top:221px;height:42px;padding-top:4px;line-height:18.6px">Save<br>Waveform</div>
<div class="btn" style="top:305px;height:42px;padding-top:12px;line-height:18px">Do Self Cal</div>
<div class="btn" style="top:448px;left:678px;width:100px;height:25px;padding-top:3px;line-height:18px">Page 1/4</div>
<!-- bottom bar -->
<div class="pill" style="left:48px;width:62px"></div>
<div class="pill" style="left:148px;width:62px"></div>
<div class="pill" style="left:248px;width:62px"></div>
<div class="pill" style="left:348px;width:62px"></div>
<div class="pill" style="left:473px;width:70px"></div>
<div class="pill" style="left:550px;width:100px"></div>
<div class="t" style="left:15px;color:#ffff00">CH1</div>
<div class="t" style="left:59px;top:459px;color:#ffff00">1.00V</div>
<div class="t" style="left:115px;color:#00ffff">CH2</div>
<div class="t" style="left:158px;top:459px;color:#00ffff">1.00V</div>
<div class="t" style="left:215px;color:#ff1a00">CH3</div>
<div class="t" style="left:258px;top:459px;color:#ff1a00">1.00V</div>
<div class="t" style="left:315px;color:#00ff00">CH4</div>
<div class="t" style="left:358px;top:459px;color:#00ff00">1.00V</div>
<div class="t" style="left:418px;color:#ffff00">CH1</div>
<div class="t" style="left:488px;top:457px;color:#ffff00">2.20V</div>
<div class="t" style="left:557px;top:457px;color:#ffff00">50.0000KHz</div>
</body></html>
